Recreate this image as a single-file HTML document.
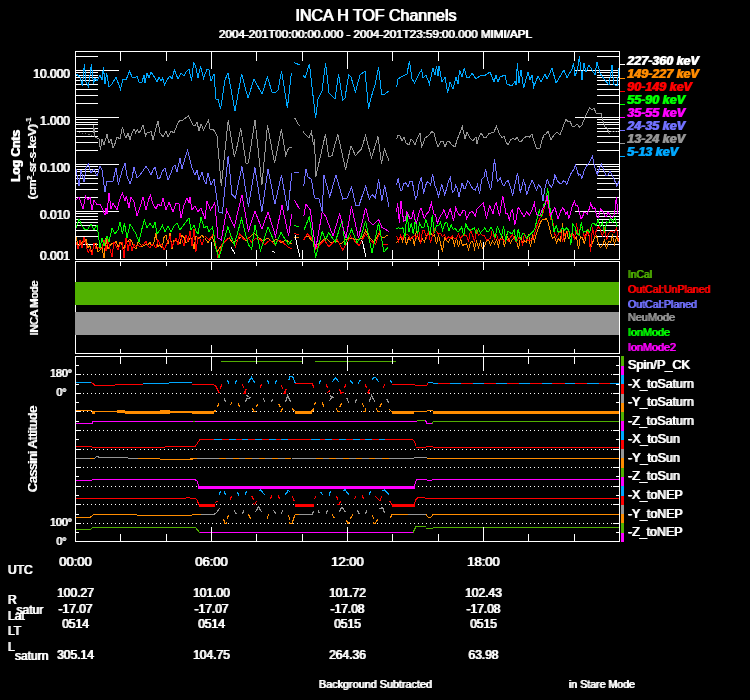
<!DOCTYPE html>
<html lang="en">
<head>
<meta charset="utf-8">
<title>INCA H TOF Channels</title>
<style>
html,body{margin:0;padding:0;background:#000;}
body{width:750px;height:700px;overflow:hidden;}
svg{display:block;font-family:"Liberation Sans",sans-serif;}
svg rect{shape-rendering:crispEdges;}
svg polyline, svg line{shape-rendering:crispEdges;stroke-linejoin:miter;}
svg text{stroke-width:0.12px;}
</style>
</head>
<body>
<svg width="750" height="700" viewBox="0 0 750 700">
<defs>
<filter id="ds" x="-2" y="-2" width="760" height="710" filterUnits="userSpaceOnUse" color-interpolation-filters="sRGB"><feOffset dx="1" dy="0" result="o"/><feMerge><feMergeNode in="SourceGraphic"/><feMergeNode in="o"/></feMerge></filter>
<filter id="dv" x="-2" y="-2" width="760" height="710" filterUnits="userSpaceOnUse" color-interpolation-filters="sRGB"><feOffset dx="0" dy="-1" result="o"/><feMerge><feMergeNode in="SourceGraphic"/><feMergeNode in="o"/></feMerge></filter>
</defs>
<rect x="0" y="0" width="750" height="700" fill="#000"/>
<g id="panel1">
<rect x="75" y="244" width="23" height="1" fill="#fff"/>
<rect x="597" y="244" width="23" height="1" fill="#fff"/>
<rect x="75" y="236" width="23" height="1" fill="#fff"/>
<rect x="597" y="236" width="23" height="1" fill="#fff"/>
<rect x="75" y="230" width="23" height="1" fill="#fff"/>
<rect x="597" y="230" width="23" height="1" fill="#fff"/>
<rect x="75" y="225" width="23" height="1" fill="#fff"/>
<rect x="597" y="225" width="23" height="1" fill="#fff"/>
<rect x="75" y="222" width="23" height="1" fill="#fff"/>
<rect x="597" y="222" width="23" height="1" fill="#fff"/>
<rect x="75" y="219" width="23" height="1" fill="#fff"/>
<rect x="597" y="219" width="23" height="1" fill="#fff"/>
<rect x="75" y="216" width="23" height="1" fill="#fff"/>
<rect x="597" y="216" width="23" height="1" fill="#fff"/>
<rect x="75" y="213" width="23" height="1" fill="#fff"/>
<rect x="597" y="213" width="23" height="1" fill="#fff"/>
<rect x="75" y="211" width="44" height="1" fill="#fff"/>
<rect x="575" y="211" width="45" height="1" fill="#fff"/>
<rect x="75" y="197" width="23" height="1" fill="#fff"/>
<rect x="597" y="197" width="23" height="1" fill="#fff"/>
<rect x="75" y="189" width="23" height="1" fill="#fff"/>
<rect x="597" y="189" width="23" height="1" fill="#fff"/>
<rect x="75" y="183" width="23" height="1" fill="#fff"/>
<rect x="597" y="183" width="23" height="1" fill="#fff"/>
<rect x="75" y="178" width="23" height="1" fill="#fff"/>
<rect x="597" y="178" width="23" height="1" fill="#fff"/>
<rect x="75" y="175" width="23" height="1" fill="#fff"/>
<rect x="597" y="175" width="23" height="1" fill="#fff"/>
<rect x="75" y="171" width="23" height="1" fill="#fff"/>
<rect x="597" y="171" width="23" height="1" fill="#fff"/>
<rect x="75" y="169" width="23" height="1" fill="#fff"/>
<rect x="597" y="169" width="23" height="1" fill="#fff"/>
<rect x="75" y="166" width="23" height="1" fill="#fff"/>
<rect x="597" y="166" width="23" height="1" fill="#fff"/>
<rect x="75" y="164" width="44" height="1" fill="#fff"/>
<rect x="575" y="164" width="45" height="1" fill="#fff"/>
<rect x="75" y="150" width="23" height="1" fill="#fff"/>
<rect x="597" y="150" width="23" height="1" fill="#fff"/>
<rect x="75" y="142" width="23" height="1" fill="#fff"/>
<rect x="597" y="142" width="23" height="1" fill="#fff"/>
<rect x="75" y="136" width="23" height="1" fill="#fff"/>
<rect x="597" y="136" width="23" height="1" fill="#fff"/>
<rect x="75" y="131" width="23" height="1" fill="#fff"/>
<rect x="597" y="131" width="23" height="1" fill="#fff"/>
<rect x="75" y="128" width="23" height="1" fill="#fff"/>
<rect x="597" y="128" width="23" height="1" fill="#fff"/>
<rect x="75" y="124" width="23" height="1" fill="#fff"/>
<rect x="597" y="124" width="23" height="1" fill="#fff"/>
<rect x="75" y="122" width="23" height="1" fill="#fff"/>
<rect x="597" y="122" width="23" height="1" fill="#fff"/>
<rect x="75" y="119" width="23" height="1" fill="#fff"/>
<rect x="597" y="119" width="23" height="1" fill="#fff"/>
<rect x="75" y="117" width="44" height="1" fill="#fff"/>
<rect x="575" y="117" width="45" height="1" fill="#fff"/>
<rect x="75" y="103" width="23" height="1" fill="#fff"/>
<rect x="597" y="103" width="23" height="1" fill="#fff"/>
<rect x="75" y="95" width="23" height="1" fill="#fff"/>
<rect x="597" y="95" width="23" height="1" fill="#fff"/>
<rect x="75" y="89" width="23" height="1" fill="#fff"/>
<rect x="597" y="89" width="23" height="1" fill="#fff"/>
<rect x="75" y="84" width="23" height="1" fill="#fff"/>
<rect x="597" y="84" width="23" height="1" fill="#fff"/>
<rect x="75" y="80" width="23" height="1" fill="#fff"/>
<rect x="597" y="80" width="23" height="1" fill="#fff"/>
<rect x="75" y="77" width="23" height="1" fill="#fff"/>
<rect x="597" y="77" width="23" height="1" fill="#fff"/>
<rect x="75" y="75" width="23" height="1" fill="#fff"/>
<rect x="597" y="75" width="23" height="1" fill="#fff"/>
<rect x="75" y="72" width="23" height="1" fill="#fff"/>
<rect x="597" y="72" width="23" height="1" fill="#fff"/>
<rect x="75" y="70" width="44" height="1" fill="#fff"/>
<rect x="575" y="70" width="45" height="1" fill="#fff"/>
<rect x="75" y="56" width="23" height="1" fill="#fff"/>
<rect x="597" y="56" width="23" height="1" fill="#fff"/>
<polyline points="205.0,238.0 208.0,243.0 212.0,236.0 217.0,252.0 221.0,246.0 225.0,241.0 229.0,238.0 233.0,243.0 237.0,240.0 242.0,236.0 246.0,241.0 250.0,237.0 254.0,233.0 259.0,238.0 263.0,241.0 268.0,238.0 272.0,242.0 277.0,239.0 281.0,243.0 286.0,240.0 291.8,244.0" fill="none" stroke="#ff8c00" stroke-width="1" />
<polyline points="294.4,237.0 299.4,238.0" fill="none" stroke="#ff8c00" stroke-width="1" />
<polyline points="303.8,238.0 308.0,236.0 312.0,241.0 316.0,246.0 321.0,242.0 326.0,238.0 331.0,243.0 336.0,241.0 341.0,244.0 345.0,240.0 351.5,238.0 357.0,240.0 362.4,238.0 365.6,230.5 370.0,238.0 374.3,242.4 378.6,233.7 383.0,238.0 388.4,234.8" fill="none" stroke="#ff8c00" stroke-width="1" />
<polyline points="76.0,236.7 78.0,245.0 80.0,245.2 82.0,242.1 84.0,241.5 86.0,239.3 88.0,247.5 90.0,245.7 92.0,255.0 94.0,243.1 96.0,243.2 98.0,252.1 100.0,250.0 102.0,247.2 104.0,258.0 106.0,238.5 108.0,248.8 110.0,245.3 112.0,243.6 114.0,243.4 116.0,241.3 118.0,247.3 120.0,242.1 122.0,245.1 124.0,248.7 126.0,241.1 128.0,241.4 130.0,239.1 132.0,242.0 134.0,247.1 136.0,248.6 138.0,242.4 140.0,243.9 142.0,246.4 144.0,245.3 146.0,244.6 148.0,244.8 150.0,242.4 152.0,246.3 154.0,242.2 156.0,233.0 158.0,246.7 160.0,244.5 162.0,248.3 164.0,237.4 166.0,235.1 168.0,244.3 170.0,233.3 172.0,249.2 174.0,239.8 176.0,240.9 178.0,241.2 180.0,243.6 182.0,235.4 184.0,237.5 186.0,242.4 188.0,241.4 190.0,238.5 192.0,239.1 194.0,248.9 196.0,235.8 198.0,238.5 200.0,237.5 202.0,234.7 204.0,238.3" fill="none" stroke="#ff8c00" stroke-width="1" />
<polyline points="396.5,242.9 398.5,240.2 400.5,236.8 402.5,241.5 404.5,234.8 406.5,244.9 408.5,237.7 410.5,240.0 412.5,236.8 414.5,245.6 416.5,229.7 418.5,239.0 420.5,242.3 422.5,239.0 424.5,241.7 426.5,236.2 428.5,232.3 430.5,232.2 432.5,235.7 434.5,235.0 436.5,244.1 438.5,234.6 440.5,243.3 442.5,251.7 444.5,237.7 446.5,240.4 448.5,241.9 450.5,238.2 452.5,237.8 454.5,245.3 456.5,238.0 458.5,247.3 460.5,238.9 462.5,245.3 464.5,244.7 466.5,243.9 468.5,249.6 470.5,242.3 472.5,241.2 474.5,248.9 476.5,241.2 478.5,247.3 480.5,241.4 482.5,248.3 484.5,246.7 486.5,240.9 488.5,239.9 490.5,245.1 492.5,241.3 494.5,243.9 496.5,239.8 498.5,246.1 500.5,238.3 502.5,236.8 504.5,247.4 506.5,235.0 508.5,239.1 510.5,243.2 512.5,239.4 514.5,236.8 516.5,241.3 518.5,248.9 520.5,236.7 522.5,243.0 524.5,240.9 526.5,242.1 528.5,234.1 530.5,246.8 532.5,235.7 534.5,241.3 536.5,233.1 538.5,227.9 540.5,222.2 542.5,219.7 544.5,219.6 546.5,218.4 548.5,223.2 550.5,232.7 552.5,238.6 554.5,236.9 556.5,242.5 558.5,238.7 560.5,240.9 562.5,223.4 564.5,242.1 566.5,231.5 568.5,238.3 570.5,236.2 572.5,232.4 574.5,238.9 576.5,236.7 578.5,249.2 580.5,236.3 582.5,238.0 584.5,244.0 586.5,231.0 588.5,232.3 590.5,248.0 592.5,243.0 594.5,237.4 596.5,235.3 598.5,244.0 600.5,247.5 602.5,245.7 604.5,240.1 606.5,248.9 608.5,241.3 610.5,242.5 612.5,235.7 614.5,243.9 616.5,237.4 618.5,241.7" fill="none" stroke="#ff8c00" stroke-width="1" />
<polyline points="205.0,236.0 209.0,240.0 213.7,233.7 218.0,257.6 222.0,244.6 226.7,240.0 231.0,236.0 235.4,246.7 239.7,233.7 244.0,240.0 248.4,238.0 251.7,242.4 256.0,238.0 260.4,240.0 264.7,244.6 270.0,240.0 274.5,244.6 278.8,240.0 283.0,242.4 287.5,246.7 291.8,249.0" fill="none" stroke="#ff0000" stroke-width="1" />
<polyline points="294.4,233.7 299.4,234.8" fill="none" stroke="#ff0000" stroke-width="1" />
<polyline points="303.8,240.0 307.0,233.7 311.4,238.0 315.7,249.0 320.0,244.6 324.4,240.0 328.7,246.7 333.0,242.4 337.4,240.0 342.8,250.0 347.2,242.4 350.4,236.0 355.9,242.4 359.0,245.7 365.6,233.7 370.0,240.0 375.4,244.6 379.7,231.5 383.0,244.6 388.4,244.6" fill="none" stroke="#ff0000" stroke-width="1" />
<polyline points="76.0,241.7 78.0,248.9 80.0,240.5 82.0,248.0 84.0,237.1 86.0,245.2 88.0,252.4 90.0,249.3 92.0,254.8 94.0,243.0 96.0,248.6 98.0,246.9 100.0,248.8 102.0,248.5 104.0,239.7 106.0,251.3 108.0,239.4 110.0,248.6 112.0,256.8 114.0,241.9 116.0,246.1 118.0,249.8 120.0,244.3 122.0,242.1 124.0,258.0 126.0,238.1 128.0,250.6 130.0,240.6 132.0,250.5 134.0,244.6 136.0,246.9 138.0,244.9 140.0,247.2 142.0,245.1 144.0,243.9 146.0,241.4 148.0,246.2 150.0,247.6 152.0,244.3 154.0,245.0 156.0,248.3 158.0,239.6 160.0,244.4 162.0,245.1 164.0,249.8 166.0,245.6 168.0,241.1 170.0,236.4 172.0,247.4 174.0,241.9 176.0,238.5 178.0,244.9 180.0,233.4 182.0,240.2 184.0,246.2 186.0,234.8 188.0,241.4 190.0,231.0 192.0,246.2 194.0,228.8 196.0,251.5 198.0,236.7 200.0,239.1 202.0,244.7 204.0,238.7" fill="none" stroke="#ff0000" stroke-width="1" />
<polyline points="396.5,235.7 398.5,241.7 400.5,235.0 402.5,238.6 404.5,234.6 406.5,234.2 408.5,235.2 410.5,239.6 412.5,237.2 414.5,235.3 416.5,238.1 418.5,228.4 420.5,244.1 422.5,230.3 424.5,231.0 426.5,237.4 428.5,232.0 430.5,243.0 432.5,235.2 434.5,229.1 436.5,231.4 438.5,234.3 440.5,233.1 442.5,236.6 444.5,234.6 446.5,239.6 448.5,236.8 450.5,238.2 452.5,236.2 454.5,238.8 456.5,238.2 458.5,234.0 460.5,238.6 462.5,235.8 464.5,235.0 466.5,235.1 468.5,241.9 470.5,230.3 472.5,234.7 474.5,241.5 476.5,230.4 478.5,235.6 480.5,233.2 482.5,236.0 484.5,235.9 486.5,240.3 488.5,239.1 490.5,238.5 492.5,228.6 494.5,239.1 496.5,234.9 498.5,240.0 500.5,239.3 502.5,239.5 504.5,241.1 506.5,238.9 508.5,241.2 510.5,237.3 512.5,234.5 514.5,239.3 516.5,242.4 518.5,238.0 520.5,238.5 522.5,244.3 524.5,233.9 526.5,238.8 528.5,240.9 530.5,240.7 532.5,239.0 534.5,234.3 536.5,226.9 538.5,221.5 540.5,217.3 542.5,215.4 544.5,207.1 546.5,200.0 548.5,205.3 550.5,219.3 552.5,219.6 554.5,233.9 556.5,236.8 558.5,234.2 560.5,230.4 562.5,242.0 564.5,233.7 566.5,233.8 568.5,230.1 570.5,235.3 572.5,234.2 574.5,238.9 576.5,223.3 578.5,235.8 580.5,227.3 582.5,228.0 584.5,237.9 586.5,234.9 588.5,229.5 590.5,252.3 592.5,227.0 594.5,237.3 596.5,229.6 598.5,226.6 600.5,230.2 602.5,235.8 604.5,227.4 606.5,240.3 608.5,233.8 610.5,231.7 612.5,232.0 614.5,232.3 616.5,227.8 618.5,241.1" fill="none" stroke="#ff0000" stroke-width="1" />
<polyline points="76.0,228.0 79.0,219.0 82.0,226.0 85.0,230.0 88.0,229.0 91.0,224.0 94.0,230.0 97.0,225.0 98.0,232.0 100.0,248.0 102.0,238.0 104.0,246.0 107.0,236.0 109.0,242.0 112.0,228.0 115.0,234.0 118.0,230.0 120.0,222.0 122.4,234.0 124.4,223.0 127.0,238.0 130.0,224.0 133.0,229.0 136.0,234.0 139.0,242.0 141.6,230.0 144.4,220.0 147.0,228.0 150.0,223.0 153.0,228.0 155.0,222.0 157.0,234.0 160.0,230.0 162.4,225.0 165.0,232.0 168.0,226.0 171.0,232.0 174.0,226.0 177.0,223.0 180.0,230.0 183.0,226.0 186.0,222.0 189.0,218.0 191.0,230.0 194.0,225.0 196.0,231.0 198.0,234.0 201.0,217.0 204.0,228.0 207.0,226.0 209.0,231.5 212.6,227.0 215.9,249.0 219.0,257.6 227.8,227.0 234.3,244.6 241.5,218.5 248.4,244.6 251.7,249.0 254.9,225.0 260.4,251.0 268.0,227.0 275.5,244.6 281.0,232.6 288.6,244.6 291.8,240.0" fill="none" stroke="#00ff00" stroke-width="1" />
<polyline points="294.4,225.7 299.4,226.8" fill="none" stroke="#00ff00" stroke-width="1" />
<polyline points="303.8,230.5 309.2,217.0 315.7,257.6 322.2,231.5 325.5,240.0 328.7,232.6 335.2,242.0 342.2,220.7 345.0,244.6 351.5,229.4 357.0,242.4 361.3,236.0 365.6,220.7 372.0,253.0 378.6,222.9 384.0,252.0 388.4,246.7" fill="none" stroke="#00ff00" stroke-width="1" />
<polyline points="396.5,228.6 398.6,227.6 400.7,228.7 402.8,227.5 404.9,237.5 407.0,212.5 409.1,232.3 411.2,223.2 413.3,233.9 415.4,219.5 417.5,234.3 419.6,223.1 421.7,227.6 423.8,228.0 425.9,219.4 428.0,226.4 430.1,235.4 432.2,215.2 434.3,233.3 436.4,225.2 438.5,225.6 440.6,222.1 442.7,230.3 444.8,223.4 446.9,222.2 449.0,231.2 451.1,224.6 453.2,229.5 455.3,228.4 457.4,231.9 459.5,230.6 461.6,226.7 463.7,235.7 465.8,223.8 467.9,228.3 470.0,230.7 472.1,229.4 474.2,227.7 476.3,233.6 478.4,229.1 480.5,232.8 482.6,230.5 484.7,228.0 486.8,231.2 488.9,231.1 491.0,227.6 493.1,231.2 495.2,237.5 497.3,226.8 499.4,231.1 501.5,236.7 503.6,226.2 505.7,241.5 507.8,231.5 509.9,232.7 512.0,234.1 514.1,229.8 516.2,242.2 518.3,228.6 520.4,239.9 522.5,233.3 524.6,234.2 526.7,238.4 528.8,235.8 530.9,233.7 533.0,231.6 535.1,227.9 537.2,217.8 539.3,210.5 541.4,217.1 543.5,205.3 545.6,202.8 547.7,188.4 549.8,207.1 551.9,219.2 554.0,231.5 556.1,225.4 558.2,232.2 560.3,231.2 562.4,227.6 564.5,230.2 566.6,228.1 568.7,230.1 570.8,244.7 572.9,224.1 575.0,227.3 577.1,233.8 579.2,235.3 581.3,222.0 583.4,232.5 585.5,231.3 587.6,230.0 589.7,232.4 591.8,224.2 593.9,222.9 596.0,225.6 598.1,219.8 600.2,226.8 602.3,222.0 604.4,233.2 606.5,222.0 608.6,222.7 610.7,218.0 612.8,222.5 614.9,217.1 617.0,226.7" fill="none" stroke="#00ff00" stroke-width="1" />
<polyline points="76.0,200.0 79.0,197.0 83.0,209.0 85.6,196.0 88.0,200.0 90.0,197.0 92.0,210.0 94.0,200.0 97.0,205.0 100.0,204.0 102.0,208.0 105.0,215.0 106.0,208.0 107.0,214.0 109.0,193.0 111.0,209.0 113.0,203.0 117.0,210.0 119.5,200.0 122.4,193.0 125.0,201.0 126.4,196.0 129.0,208.0 131.0,197.0 134.0,202.0 137.0,216.0 140.0,207.0 143.0,197.0 146.0,210.0 148.4,200.0 150.4,195.0 153.0,204.0 156.0,209.0 158.0,204.0 161.0,206.0 163.0,198.0 166.0,210.0 169.0,202.0 173.0,212.0 176.0,203.0 179.0,204.0 181.0,218.0 184.0,205.0 187.0,198.0 189.0,203.0 190.0,197.0 192.0,210.0 195.0,206.0 198.0,212.0 201.0,208.0 205.0,219.0 207.0,201.0 210.4,210.0 214.8,203.0 218.0,238.0 221.3,240.0 226.7,210.0 234.3,227.0 241.9,194.7 248.4,231.5 254.9,211.0 261.9,229.0 268.0,212.0 275.5,236.0 282.0,205.5 288.6,236.0 291.8,214.0" fill="none" stroke="#ff00ff" stroke-width="1" />
<polyline points="294.4,200.0 299.4,208.8" fill="none" stroke="#ff00ff" stroke-width="1" />
<polyline points="303.8,216.0 306.0,204.0 310.3,210.0 315.7,249.0 322.2,212.0 325.5,216.0 333.0,236.0 339.6,214.0 346.0,238.0 351.5,206.6 358.5,238.0 365.6,207.7 368.9,220.7 373.2,225.0 378.6,219.6 381.9,227.2 389.0,231.5" fill="none" stroke="#ff00ff" stroke-width="1" />
<polyline points="396.4,212.0 397.7,203.0 399.3,223.0 401.0,201.0 403.6,221.0 405.2,220.3 406.9,212.0 410.0,218.5 411.7,218.3 413.4,210.0 415.0,220.0 416.6,223.0 419.0,213.0 421.0,207.7 424.2,218.5 426.5,214.0 428.6,212.0 431.4,203.0 434.0,214.0 435.6,214.8 437.3,223.0 440.5,216.0 442.1,213.8 443.8,210.0 447.0,218.5 448.6,213.0 450.3,208.8 453.5,220.7 455.7,207.7 458.0,213.0 460.0,216.0 461.6,213.3 463.3,210.0 465.0,210.9 466.6,218.5 469.5,213.0 472.0,211.0 475.2,216.0 476.9,209.1 478.5,207.7 480.5,205.5 483.3,203.0 486.5,218.5 488.1,211.5 489.8,205.5 493.0,214.0 494.6,206.0 496.3,203.0 499.5,216.0 501.1,205.4 502.8,195.7 506.0,214.0 507.6,213.1 509.3,220.7 511.0,211.6 512.6,210.0 514.7,225.0 516.4,218.2 518.0,207.7 519.6,209.1 521.2,212.0 524.0,217.0 526.7,212.0 529.5,215.0 532.0,210.0 534.3,203.0 536.4,214.0 538.0,215.1 539.7,216.0 542.5,209.0 545.0,205.5 547.3,194.7 548.9,207.5 550.5,216.0 552.7,211.0 554.9,207.7 558.0,218.5 560.3,212.0 562.5,207.7 564.1,209.6 565.7,214.0 567.4,212.3 569.0,218.5 571.7,208.0 574.4,201.0 576.0,205.8 577.7,205.5 579.4,212.8 581.0,218.5 582.6,216.7 584.2,212.0 587.4,214.0 589.0,209.6 590.7,203.0 593.0,209.0 595.0,207.7 596.6,216.8 598.3,217.4 600.5,208.8 602.6,211.2 604.8,216.0 606.4,216.3 608.0,212.0 609.6,214.1 611.3,218.5 613.0,216.9 614.6,214.0 616.3,196.8 618.0,214.0" fill="none" stroke="#ff00ff" stroke-width="1" />
<polyline points="76.0,169.0 79.0,186.0 81.0,170.0 84.0,182.0 86.0,168.0 88.4,164.0 91.0,173.0 94.0,169.0 97.0,176.0 100.0,166.0 102.0,170.0 105.0,192.0 107.0,181.0 110.0,182.0 113.0,181.0 116.0,168.0 118.4,185.0 120.4,176.8 122.4,170.0 125.0,163.0 127.0,176.0 130.0,184.0 132.0,178.1 134.0,167.0 137.0,178.0 140.0,175.0 143.0,171.0 146.0,166.0 148.4,170.0 151.0,175.0 153.0,170.0 155.0,167.0 158.0,179.0 160.0,177.6 162.0,172.0 165.0,168.0 168.0,180.0 171.0,173.0 173.0,167.3 175.0,165.0 177.0,172.0 180.0,158.0 182.0,169.0 185.0,158.0 187.6,150.0 190.0,160.0 192.0,168.0 195.0,175.0 197.0,170.0 199.0,180.0 202.0,172.0 204.0,180.2 206.0,184.0 208.0,173.0 211.0,185.0 214.0,179.0 217.0,200.0 219.0,212.0 222.4,213.0 228.2,155.6 232.0,194.7 235.4,198.0 241.9,166.4 248.4,206.6 254.9,167.5 261.9,212.0 268.0,168.6 274.9,204.4 281.4,175.0 287.9,211.0 291.8,173.0" fill="none" stroke="#7272ff" stroke-width="1" />
<polyline points="294.0,172.0 299.4,173.0" fill="none" stroke="#7272ff" stroke-width="1" />
<polyline points="303.8,186.0 306.0,168.6 308.0,177.0 311.4,179.5 314.6,198.0 319.0,199.0 322.2,212.0 324.0,175.0 329.8,196.8 335.9,175.0 342.8,199.0 347.2,198.0 351.5,187.0 355.9,205.5 359.0,205.5 365.6,186.0 369.3,199.0 372.0,194.7 375.4,198.0 378.6,179.5 381.9,201.0 384.7,185.0 389.0,206.6" fill="none" stroke="#7272ff" stroke-width="1" />
<polyline points="396.4,185.0 398.2,178.4 400.4,190.3 402.0,190.3 403.6,183.8 405.8,182.9 408.0,187.0 410.1,181.0 412.3,181.6 415.5,199.0 417.1,195.5 418.8,185.0 421.4,177.3 423.6,193.6 425.6,185.4 427.5,181.6 430.7,185.0 432.5,174.0 435.0,186.0 436.6,188.7 438.3,196.8 440.0,191.4 441.6,183.8 444.8,194.7 447.0,187.0 448.6,181.1 450.3,177.3 452.4,192.5 454.0,191.5 455.7,185.0 457.4,189.0 459.0,196.8 462.2,182.7 463.9,188.6 465.5,188.0 467.6,180.5 469.2,182.0 470.9,186.0 473.0,188.9 475.2,190.3 477.4,185.0 479.6,193.6 481.7,179.5 484.0,177.3 485.6,168.6 487.3,178.8 489.0,184.2 490.7,190.0 492.5,177.4 494.4,158.8 497.4,181.6 500.5,178.0 502.2,183.5 503.9,186.0 506.0,182.0 508.2,180.5 510.5,187.0 512.6,195.7 515.0,184.0 517.6,173.0 520.2,192.5 523.4,180.5 525.0,184.4 526.7,194.7 529.5,186.0 532.0,180.5 534.0,184.0 536.4,190.3 538.6,185.0 540.8,187.0 543.0,201.0 545.0,188.0 547.3,179.5 549.5,185.0 551.6,187.0 553.2,183.7 554.9,175.0 557.5,181.0 560.3,183.8 561.9,183.0 563.5,181.0 565.1,181.6 566.8,184.9 569.0,178.0 571.2,173.0 573.4,170.0 575.5,165.4 578.5,175.0 580.2,174.5 582.0,178.4 584.0,171.0 586.4,166.4 589.5,162.0 592.4,156.7 595.0,168.0 597.2,175.0 599.5,168.0 601.5,164.3 604.5,172.0 606.2,175.9 608.0,175.0 610.0,171.0 612.4,176.2 614.5,180.0 616.7,186.0 619.0,181.6" fill="none" stroke="#7272ff" stroke-width="1" />
<polyline points="93.0,133.0 93.6,125.0 95.0,137.0 97.0,138.0 99.0,139.0 100.4,150.0 102.0,139.0 104.0,145.0 107.0,134.0 109.0,143.0 111.0,139.0 113.0,148.0 115.0,143.6 117.0,137.0 120.0,139.0 122.4,127.0 124.2,134.2 126.0,138.0 128.0,133.0 130.0,140.0 132.0,132.9 134.0,129.0 135.7,132.8 137.3,130.1 139.0,133.0 141.0,129.9 143.0,125.0 145.6,136.0 147.3,132.5 149.0,133.0 151.0,131.0 153.0,140.0 156.0,128.0 158.0,121.0 160.0,133.0 163.0,137.0 166.0,131.0 168.0,137.0 171.0,131.0 174.0,133.0 177.0,125.0 180.0,120.0 183.0,120.0 185.6,118.0 188.4,116.0 191.0,121.0 193.0,124.8 195.0,126.0 197.0,122.0 199.0,131.0 201.0,124.0 203.6,130.0 206.0,125.0 208.6,120.0 210.0,129.0 213.0,129.0 215.6,133.0 217.0,136.0 221.3,186.0 228.2,120.0 234.3,156.7 236.5,149.0 240.8,128.5 246.2,164.0 248.4,163.0 255.0,120.0 261.9,185.0 267.5,125.0 274.5,163.0 281.4,129.5 285.7,155.6 288.6,148.0 291.8,147.0" fill="none" stroke="#969696" stroke-width="1" />
<polyline points="294.4,117.6 299.4,126.0" fill="none" stroke="#969696" stroke-width="1" />
<polyline points="303.0,131.7 309.0,138.0 311.4,131.7 313.5,144.7 314.6,139.0 315.7,177.0 325.5,134.0 328.7,156.7 332.0,155.6 337.8,134.0 345.6,169.7 351.0,145.8 355.4,155.6 361.3,149.0 365.6,135.6 371.5,157.8 378.0,136.5 381.5,164.0 384.5,149.0 389.0,161.0" fill="none" stroke="#969696" stroke-width="1" />
<polyline points="396.6,139.0 398.0,135.0 400.0,136.0 402.0,141.0 404.0,137.0 406.0,143.0 409.0,145.0 411.0,139.0 413.0,141.0 415.0,145.0 417.5,138.0 420.0,133.0 421.6,147.0 423.3,143.6 425.0,138.0 428.0,136.0 429.8,134.5 431.6,131.4 434.0,133.0 436.0,141.0 438.0,147.0 440.5,142.0 443.0,141.0 445.0,147.0 447.0,142.0 449.0,141.0 452.0,145.0 455.0,147.0 457.0,140.0 459.0,135.0 460.7,130.7 462.4,126.6 465.0,139.0 467.0,132.0 470.0,138.0 473.0,141.0 476.0,137.0 477.0,144.0 479.0,136.8 481.0,133.0 483.5,137.0 486.0,138.0 488.5,134.0 491.0,133.0 494.0,132.0 496.4,126.0 499.0,133.0 502.0,138.0 504.0,136.0 506.0,142.0 508.0,145.0 510.5,140.0 513.0,138.0 515.0,140.0 517.0,137.0 519.0,141.0 521.0,142.0 524.0,138.0 527.0,136.0 529.5,137.0 532.0,134.0 534.5,143.0 537.0,149.0 540.0,148.0 542.0,140.0 544.0,135.0 546.0,134.0 548.0,131.0 551.0,140.0 554.0,135.0 557.0,132.0 560.0,135.0 563.0,127.0 566.0,119.0 568.0,122.0 570.0,121.0 572.0,125.8 574.0,127.0 577.0,124.0 579.5,127.0 582.0,125.0 585.0,117.0 588.0,111.0 589.6,108.0 592.0,110.0 594.0,108.0 596.0,112.8 598.0,114.0 601.0,113.0 603.0,121.0 605.0,127.0 607.0,128.0 609.0,133.0" fill="none" stroke="#969696" stroke-width="1" />
<polyline points="76.0,74.0 80.0,77.0 82.4,86.0 84.4,64.0 86.0,82.0 88.4,87.0 90.0,75.0 91.4,64.0 93.6,84.0 95.0,78.0 97.0,81.0 100.0,75.0 102.0,80.0 103.4,67.0 105.0,84.0 106.6,73.0 109.0,87.0 112.0,84.0 116.0,77.0 120.4,89.0 123.0,79.0 126.0,80.0 129.6,71.0 132.0,77.0 135.0,78.0 137.0,76.0 139.0,82.0 142.0,82.0 144.0,75.0 145.0,83.0 147.0,73.0 149.0,78.0 151.0,72.0 153.0,75.0 155.0,78.0 157.0,82.0 159.0,77.0 161.0,81.0 162.6,78.0 164.6,85.0 167.0,80.0 170.0,76.0 172.0,79.0 174.4,70.0 178.0,79.0 181.0,73.0 184.0,76.0 186.0,72.0 189.0,69.0 191.6,81.0 193.6,63.0 195.6,66.0 198.0,78.0 200.6,66.0 203.6,78.0 207.0,69.0 209.0,70.0 211.0,81.0 214.0,74.0 216.0,99.0 218.0,99.0 220.6,109.0 225.0,80.0 228.0,73.0 235.0,111.0 241.6,74.0 248.0,98.0 254.0,79.0 262.0,94.0 267.4,77.0 272.0,92.0 275.0,93.0 278.0,90.0 281.6,71.0 287.4,108.0 291.4,73.0" fill="none" stroke="#00a8ff" stroke-width="1" />
<polyline points="294.0,62.6 300.0,65.0" fill="none" stroke="#00a8ff" stroke-width="1" />
<polyline points="303.0,75.0 305.0,78.0 309.4,64.0 315.6,118.0 318.0,99.0 322.0,91.0 325.6,63.0 329.0,93.0 335.0,99.0 338.6,74.0 342.6,100.0 345.0,98.0 348.6,75.0 351.0,77.0 355.4,92.0 360.0,75.0 365.0,71.0 368.6,109.0 370.6,99.0 375.0,85.0 378.6,67.0 381.6,94.0 385.0,94.0 389.0,91.0" fill="none" stroke="#00a8ff" stroke-width="1" />
<polyline points="396.6,87.0 398.0,79.0 403.0,76.0 407.0,74.0 409.4,61.0 412.0,79.0 414.6,83.0 418.0,76.0 420.0,72.0 421.6,70.0 423.0,78.0 426.0,75.0 429.4,84.0 433.0,68.0 435.0,75.0 436.6,66.0 438.0,76.0 439.0,66.0 442.0,82.0 445.0,77.0 447.6,93.0 450.0,82.0 453.0,89.0 456.0,77.0 458.0,84.0 459.6,70.0 462.0,77.0 464.4,68.0 466.4,77.0 469.0,78.0 472.0,73.0 476.0,79.0 481.0,75.0 484.0,76.0 490.0,72.0 494.0,82.0 496.0,75.0 498.0,82.0 500.0,77.0 505.0,75.0 507.0,84.0 512.0,86.0 515.0,81.0 516.0,85.0 517.4,63.0 519.0,83.0 521.0,70.0 523.6,88.0 528.0,72.0 530.0,80.0 532.0,75.0 533.6,87.0 538.0,76.0 541.0,82.0 545.0,74.0 547.0,79.0 549.0,75.0 552.0,68.0 556.0,83.0 564.0,70.0 567.0,78.0 572.0,69.0 573.6,63.0 575.0,76.0 577.4,70.0 579.4,56.0 582.0,80.0 584.0,63.0 586.0,72.0 589.0,65.0 592.0,70.0 595.0,75.0 597.0,62.0 600.0,73.0 604.0,79.0 609.0,85.0 612.0,65.0 613.6,84.0 617.0,86.0 619.0,68.0" fill="none" stroke="#00a8ff" stroke-width="1" />
<polyline points="230.7,246.7 234.7,253.5" fill="none" stroke="#ffffff" stroke-width="1" />
<polyline points="272.0,251.0 274.7,252.5" fill="none" stroke="#ffffff" stroke-width="1" />
<polyline points="295.0,235.0 296.5,242.7 300.0,256.5" fill="none" stroke="#ffffff" stroke-width="1" />
<polyline points="361.3,240.0 362.7,242.7 365.8,256.5" fill="none" stroke="#ffffff" stroke-width="1" />
<polyline points="76,131.5 92,135.5" fill="none" stroke="#6e6e6e" stroke-width="1" stroke-dasharray="1.2,2"/>
<polyline points="609,133.5 612,131.5 618,131.5" fill="none" stroke="#7a7a7a" stroke-width="1" stroke-dasharray="1.5,1.5"/>
<rect x="75" y="51" width="545" height="1" fill="#fff"/>
<rect x="75" y="259" width="545" height="1" fill="#fff"/>
<rect x="75" y="51" width="1" height="209" fill="#fff"/>
<rect x="619" y="51" width="1" height="209" fill="#fff"/>
<rect x="120" y="51" width="1" height="10" fill="#fff"/>
<rect x="120" y="250" width="1" height="10" fill="#fff"/>
<rect x="166" y="51" width="1" height="10" fill="#fff"/>
<rect x="166" y="250" width="1" height="10" fill="#fff"/>
<rect x="211" y="51" width="1" height="18" fill="#fff"/>
<rect x="211" y="242" width="1" height="18" fill="#fff"/>
<rect x="256" y="51" width="1" height="10" fill="#fff"/>
<rect x="256" y="250" width="1" height="10" fill="#fff"/>
<rect x="302" y="51" width="1" height="10" fill="#fff"/>
<rect x="302" y="250" width="1" height="10" fill="#fff"/>
<rect x="347" y="51" width="1" height="18" fill="#fff"/>
<rect x="347" y="242" width="1" height="18" fill="#fff"/>
<rect x="392" y="51" width="1" height="10" fill="#fff"/>
<rect x="392" y="250" width="1" height="10" fill="#fff"/>
<rect x="438" y="51" width="1" height="10" fill="#fff"/>
<rect x="438" y="250" width="1" height="10" fill="#fff"/>
<rect x="483" y="51" width="1" height="18" fill="#fff"/>
<rect x="483" y="242" width="1" height="18" fill="#fff"/>
<rect x="528" y="51" width="1" height="10" fill="#fff"/>
<rect x="528" y="250" width="1" height="10" fill="#fff"/>
<rect x="574" y="51" width="1" height="10" fill="#fff"/>
<rect x="574" y="250" width="1" height="10" fill="#fff"/>
<g filter="url(#ds)" transform="translate(-0.5,0)">
<text x="70" y="78" font-size="12" text-anchor="end" fill="#fff" stroke="#fff" font-weight="normal" font-style="normal" >10.000</text>
<text x="70" y="125" font-size="12" text-anchor="end" fill="#fff" stroke="#fff" font-weight="normal" font-style="normal" >1.000</text>
<text x="70" y="172" font-size="12" text-anchor="end" fill="#fff" stroke="#fff" font-weight="normal" font-style="normal" >0.100</text>
<text x="70" y="219" font-size="12" text-anchor="end" fill="#fff" stroke="#fff" font-weight="normal" font-style="normal" >0.010</text>
<text x="70" y="259.5" font-size="12" text-anchor="end" fill="#fff" stroke="#fff" font-weight="normal" font-style="normal" >0.001</text>
</g>
</g>
<g id="panel2">
<rect x="75" y="261" width="545" height="1" fill="#fff"/>
<rect x="75" y="353" width="545" height="1" fill="#fff"/>
<rect x="75" y="261" width="1" height="93" fill="#fff"/>
<rect x="619" y="261" width="1" height="93" fill="#fff"/>
<rect x="75" y="282" width="544" height="23" fill="#50b000"/>
<rect x="75" y="312" width="544" height="23" fill="#969696"/>
<rect x="120" y="261" width="1" height="5" fill="#fff"/>
<rect x="120" y="349" width="1" height="5" fill="#fff"/>
<rect x="166" y="261" width="1" height="5" fill="#fff"/>
<rect x="166" y="349" width="1" height="5" fill="#fff"/>
<rect x="211" y="261" width="1" height="9" fill="#fff"/>
<rect x="211" y="345" width="1" height="9" fill="#fff"/>
<rect x="256" y="261" width="1" height="5" fill="#fff"/>
<rect x="256" y="349" width="1" height="5" fill="#fff"/>
<rect x="302" y="261" width="1" height="5" fill="#fff"/>
<rect x="302" y="349" width="1" height="5" fill="#fff"/>
<rect x="347" y="261" width="1" height="9" fill="#fff"/>
<rect x="347" y="345" width="1" height="9" fill="#fff"/>
<rect x="392" y="261" width="1" height="5" fill="#fff"/>
<rect x="392" y="349" width="1" height="5" fill="#fff"/>
<rect x="438" y="261" width="1" height="5" fill="#fff"/>
<rect x="438" y="349" width="1" height="5" fill="#fff"/>
<rect x="483" y="261" width="1" height="9" fill="#fff"/>
<rect x="483" y="345" width="1" height="9" fill="#fff"/>
<rect x="528" y="261" width="1" height="5" fill="#fff"/>
<rect x="528" y="349" width="1" height="5" fill="#fff"/>
<rect x="574" y="261" width="1" height="5" fill="#fff"/>
<rect x="574" y="349" width="1" height="5" fill="#fff"/>
</g>
<g id="panel3">
<path d="M83 374.5h1M87 374.5h1M91 374.5h1M95 374.5h1M99 374.5h1M103 374.5h1M107 374.5h1M111 374.5h1M115 374.5h1M119 374.5h1M123 374.5h1M127 374.5h1M131 374.5h1M135 374.5h1M140 374.5h1M144 374.5h1M148 374.5h1M152 374.5h1M156 374.5h1M160 374.5h1M164 374.5h1M168 374.5h1M172 374.5h1M176 374.5h1M180 374.5h1M184 374.5h1M188 374.5h1M192 374.5h1M196 374.5h1M200 374.5h1M204 374.5h1M208 374.5h1M212 374.5h1M216 374.5h1M220 374.5h1M224 374.5h1M228 374.5h1M232 374.5h1M236 374.5h1M240 374.5h1M244 374.5h1M248 374.5h1M252 374.5h1M256 374.5h1M260 374.5h1M264 374.5h1M268 374.5h1M273 374.5h1M277 374.5h1M281 374.5h1M285 374.5h1M289 374.5h1M293 374.5h1M297 374.5h1M301 374.5h1M305 374.5h1M309 374.5h1M313 374.5h1M317 374.5h1M321 374.5h1M325 374.5h1M329 374.5h1M333 374.5h1M337 374.5h1M341 374.5h1M345 374.5h1M349 374.5h1M353 374.5h1M357 374.5h1M361 374.5h1M365 374.5h1M369 374.5h1M373 374.5h1M377 374.5h1M381 374.5h1M385 374.5h1M389 374.5h1M393 374.5h1M397 374.5h1M401 374.5h1M405 374.5h1M410 374.5h1M414 374.5h1M418 374.5h1M422 374.5h1M426 374.5h1M430 374.5h1M434 374.5h1M438 374.5h1M442 374.5h1M446 374.5h1M450 374.5h1M454 374.5h1M458 374.5h1M462 374.5h1M466 374.5h1M470 374.5h1M474 374.5h1M478 374.5h1M482 374.5h1M486 374.5h1M490 374.5h1M494 374.5h1M498 374.5h1M502 374.5h1M506 374.5h1M510 374.5h1M514 374.5h1M518 374.5h1M522 374.5h1M526 374.5h1M530 374.5h1M534 374.5h1M538 374.5h1M543 374.5h1M547 374.5h1M551 374.5h1M555 374.5h1M559 374.5h1M563 374.5h1M567 374.5h1M571 374.5h1M575 374.5h1M579 374.5h1M583 374.5h1M587 374.5h1M591 374.5h1M595 374.5h1M599 374.5h1M603 374.5h1M607 374.5h1M611 374.5h1" stroke="#fff" stroke-width="1" fill="none" shape-rendering="crispEdges"/>
<rect x="75" y="374" width="6" height="1" fill="#fff"/>
<rect x="613" y="374" width="7" height="1" fill="#fff"/>
<path d="M83 393.5h1M87 393.5h1M91 393.5h1M95 393.5h1M99 393.5h1M103 393.5h1M107 393.5h1M111 393.5h1M115 393.5h1M119 393.5h1M123 393.5h1M127 393.5h1M131 393.5h1M135 393.5h1M140 393.5h1M144 393.5h1M148 393.5h1M152 393.5h1M156 393.5h1M160 393.5h1M164 393.5h1M168 393.5h1M172 393.5h1M176 393.5h1M180 393.5h1M184 393.5h1M188 393.5h1M192 393.5h1M196 393.5h1M200 393.5h1M204 393.5h1M208 393.5h1M212 393.5h1M216 393.5h1M220 393.5h1M224 393.5h1M228 393.5h1M232 393.5h1M236 393.5h1M240 393.5h1M244 393.5h1M248 393.5h1M252 393.5h1M256 393.5h1M260 393.5h1M264 393.5h1M268 393.5h1M273 393.5h1M277 393.5h1M281 393.5h1M285 393.5h1M289 393.5h1M293 393.5h1M297 393.5h1M301 393.5h1M305 393.5h1M309 393.5h1M313 393.5h1M317 393.5h1M321 393.5h1M325 393.5h1M329 393.5h1M333 393.5h1M337 393.5h1M341 393.5h1M345 393.5h1M349 393.5h1M353 393.5h1M357 393.5h1M361 393.5h1M365 393.5h1M369 393.5h1M373 393.5h1M377 393.5h1M381 393.5h1M385 393.5h1M389 393.5h1M393 393.5h1M397 393.5h1M401 393.5h1M405 393.5h1M410 393.5h1M414 393.5h1M418 393.5h1M422 393.5h1M426 393.5h1M430 393.5h1M434 393.5h1M438 393.5h1M442 393.5h1M446 393.5h1M450 393.5h1M454 393.5h1M458 393.5h1M462 393.5h1M466 393.5h1M470 393.5h1M474 393.5h1M478 393.5h1M482 393.5h1M486 393.5h1M490 393.5h1M494 393.5h1M498 393.5h1M502 393.5h1M506 393.5h1M510 393.5h1M514 393.5h1M518 393.5h1M522 393.5h1M526 393.5h1M530 393.5h1M534 393.5h1M538 393.5h1M543 393.5h1M547 393.5h1M551 393.5h1M555 393.5h1M559 393.5h1M563 393.5h1M567 393.5h1M571 393.5h1M575 393.5h1M579 393.5h1M583 393.5h1M587 393.5h1M591 393.5h1M595 393.5h1M599 393.5h1M603 393.5h1M607 393.5h1M611 393.5h1" stroke="#fff" stroke-width="1" fill="none" shape-rendering="crispEdges"/>
<rect x="75" y="393" width="6" height="1" fill="#fff"/>
<rect x="613" y="393" width="7" height="1" fill="#fff"/>
<path d="M83 411.5h1M87 411.5h1M91 411.5h1M95 411.5h1M99 411.5h1M103 411.5h1M107 411.5h1M111 411.5h1M115 411.5h1M119 411.5h1M123 411.5h1M127 411.5h1M131 411.5h1M135 411.5h1M140 411.5h1M144 411.5h1M148 411.5h1M152 411.5h1M156 411.5h1M160 411.5h1M164 411.5h1M168 411.5h1M172 411.5h1M176 411.5h1M180 411.5h1M184 411.5h1M188 411.5h1M192 411.5h1M196 411.5h1M200 411.5h1M204 411.5h1M208 411.5h1M212 411.5h1M216 411.5h1M220 411.5h1M224 411.5h1M228 411.5h1M232 411.5h1M236 411.5h1M240 411.5h1M244 411.5h1M248 411.5h1M252 411.5h1M256 411.5h1M260 411.5h1M264 411.5h1M268 411.5h1M273 411.5h1M277 411.5h1M281 411.5h1M285 411.5h1M289 411.5h1M293 411.5h1M297 411.5h1M301 411.5h1M305 411.5h1M309 411.5h1M313 411.5h1M317 411.5h1M321 411.5h1M325 411.5h1M329 411.5h1M333 411.5h1M337 411.5h1M341 411.5h1M345 411.5h1M349 411.5h1M353 411.5h1M357 411.5h1M361 411.5h1M365 411.5h1M369 411.5h1M373 411.5h1M377 411.5h1M381 411.5h1M385 411.5h1M389 411.5h1M393 411.5h1M397 411.5h1M401 411.5h1M405 411.5h1M410 411.5h1M414 411.5h1M418 411.5h1M422 411.5h1M426 411.5h1M430 411.5h1M434 411.5h1M438 411.5h1M442 411.5h1M446 411.5h1M450 411.5h1M454 411.5h1M458 411.5h1M462 411.5h1M466 411.5h1M470 411.5h1M474 411.5h1M478 411.5h1M482 411.5h1M486 411.5h1M490 411.5h1M494 411.5h1M498 411.5h1M502 411.5h1M506 411.5h1M510 411.5h1M514 411.5h1M518 411.5h1M522 411.5h1M526 411.5h1M530 411.5h1M534 411.5h1M538 411.5h1M543 411.5h1M547 411.5h1M551 411.5h1M555 411.5h1M559 411.5h1M563 411.5h1M567 411.5h1M571 411.5h1M575 411.5h1M579 411.5h1M583 411.5h1M587 411.5h1M591 411.5h1M595 411.5h1M599 411.5h1M603 411.5h1M607 411.5h1M611 411.5h1" stroke="#fff" stroke-width="1" fill="none" shape-rendering="crispEdges"/>
<rect x="75" y="411" width="6" height="1" fill="#fff"/>
<rect x="613" y="411" width="7" height="1" fill="#fff"/>
<path d="M83 430.5h1M87 430.5h1M91 430.5h1M95 430.5h1M99 430.5h1M103 430.5h1M107 430.5h1M111 430.5h1M115 430.5h1M119 430.5h1M123 430.5h1M127 430.5h1M131 430.5h1M135 430.5h1M140 430.5h1M144 430.5h1M148 430.5h1M152 430.5h1M156 430.5h1M160 430.5h1M164 430.5h1M168 430.5h1M172 430.5h1M176 430.5h1M180 430.5h1M184 430.5h1M188 430.5h1M192 430.5h1M196 430.5h1M200 430.5h1M204 430.5h1M208 430.5h1M212 430.5h1M216 430.5h1M220 430.5h1M224 430.5h1M228 430.5h1M232 430.5h1M236 430.5h1M240 430.5h1M244 430.5h1M248 430.5h1M252 430.5h1M256 430.5h1M260 430.5h1M264 430.5h1M268 430.5h1M273 430.5h1M277 430.5h1M281 430.5h1M285 430.5h1M289 430.5h1M293 430.5h1M297 430.5h1M301 430.5h1M305 430.5h1M309 430.5h1M313 430.5h1M317 430.5h1M321 430.5h1M325 430.5h1M329 430.5h1M333 430.5h1M337 430.5h1M341 430.5h1M345 430.5h1M349 430.5h1M353 430.5h1M357 430.5h1M361 430.5h1M365 430.5h1M369 430.5h1M373 430.5h1M377 430.5h1M381 430.5h1M385 430.5h1M389 430.5h1M393 430.5h1M397 430.5h1M401 430.5h1M405 430.5h1M410 430.5h1M414 430.5h1M418 430.5h1M422 430.5h1M426 430.5h1M430 430.5h1M434 430.5h1M438 430.5h1M442 430.5h1M446 430.5h1M450 430.5h1M454 430.5h1M458 430.5h1M462 430.5h1M466 430.5h1M470 430.5h1M474 430.5h1M478 430.5h1M482 430.5h1M486 430.5h1M490 430.5h1M494 430.5h1M498 430.5h1M502 430.5h1M506 430.5h1M510 430.5h1M514 430.5h1M518 430.5h1M522 430.5h1M526 430.5h1M530 430.5h1M534 430.5h1M538 430.5h1M543 430.5h1M547 430.5h1M551 430.5h1M555 430.5h1M559 430.5h1M563 430.5h1M567 430.5h1M571 430.5h1M575 430.5h1M579 430.5h1M583 430.5h1M587 430.5h1M591 430.5h1M595 430.5h1M599 430.5h1M603 430.5h1M607 430.5h1M611 430.5h1" stroke="#fff" stroke-width="1" fill="none" shape-rendering="crispEdges"/>
<rect x="75" y="430" width="6" height="1" fill="#fff"/>
<rect x="613" y="430" width="7" height="1" fill="#fff"/>
<path d="M83 449.5h1M87 449.5h1M91 449.5h1M95 449.5h1M99 449.5h1M103 449.5h1M107 449.5h1M111 449.5h1M115 449.5h1M119 449.5h1M123 449.5h1M127 449.5h1M131 449.5h1M135 449.5h1M140 449.5h1M144 449.5h1M148 449.5h1M152 449.5h1M156 449.5h1M160 449.5h1M164 449.5h1M168 449.5h1M172 449.5h1M176 449.5h1M180 449.5h1M184 449.5h1M188 449.5h1M192 449.5h1M196 449.5h1M200 449.5h1M204 449.5h1M208 449.5h1M212 449.5h1M216 449.5h1M220 449.5h1M224 449.5h1M228 449.5h1M232 449.5h1M236 449.5h1M240 449.5h1M244 449.5h1M248 449.5h1M252 449.5h1M256 449.5h1M260 449.5h1M264 449.5h1M268 449.5h1M273 449.5h1M277 449.5h1M281 449.5h1M285 449.5h1M289 449.5h1M293 449.5h1M297 449.5h1M301 449.5h1M305 449.5h1M309 449.5h1M313 449.5h1M317 449.5h1M321 449.5h1M325 449.5h1M329 449.5h1M333 449.5h1M337 449.5h1M341 449.5h1M345 449.5h1M349 449.5h1M353 449.5h1M357 449.5h1M361 449.5h1M365 449.5h1M369 449.5h1M373 449.5h1M377 449.5h1M381 449.5h1M385 449.5h1M389 449.5h1M393 449.5h1M397 449.5h1M401 449.5h1M405 449.5h1M410 449.5h1M414 449.5h1M418 449.5h1M422 449.5h1M426 449.5h1M430 449.5h1M434 449.5h1M438 449.5h1M442 449.5h1M446 449.5h1M450 449.5h1M454 449.5h1M458 449.5h1M462 449.5h1M466 449.5h1M470 449.5h1M474 449.5h1M478 449.5h1M482 449.5h1M486 449.5h1M490 449.5h1M494 449.5h1M498 449.5h1M502 449.5h1M506 449.5h1M510 449.5h1M514 449.5h1M518 449.5h1M522 449.5h1M526 449.5h1M530 449.5h1M534 449.5h1M538 449.5h1M543 449.5h1M547 449.5h1M551 449.5h1M555 449.5h1M559 449.5h1M563 449.5h1M567 449.5h1M571 449.5h1M575 449.5h1M579 449.5h1M583 449.5h1M587 449.5h1M591 449.5h1M595 449.5h1M599 449.5h1M603 449.5h1M607 449.5h1M611 449.5h1" stroke="#fff" stroke-width="1" fill="none" shape-rendering="crispEdges"/>
<rect x="75" y="449" width="6" height="1" fill="#fff"/>
<rect x="613" y="449" width="7" height="1" fill="#fff"/>
<path d="M83 467.5h1M87 467.5h1M91 467.5h1M95 467.5h1M99 467.5h1M103 467.5h1M107 467.5h1M111 467.5h1M115 467.5h1M119 467.5h1M123 467.5h1M127 467.5h1M131 467.5h1M135 467.5h1M140 467.5h1M144 467.5h1M148 467.5h1M152 467.5h1M156 467.5h1M160 467.5h1M164 467.5h1M168 467.5h1M172 467.5h1M176 467.5h1M180 467.5h1M184 467.5h1M188 467.5h1M192 467.5h1M196 467.5h1M200 467.5h1M204 467.5h1M208 467.5h1M212 467.5h1M216 467.5h1M220 467.5h1M224 467.5h1M228 467.5h1M232 467.5h1M236 467.5h1M240 467.5h1M244 467.5h1M248 467.5h1M252 467.5h1M256 467.5h1M260 467.5h1M264 467.5h1M268 467.5h1M273 467.5h1M277 467.5h1M281 467.5h1M285 467.5h1M289 467.5h1M293 467.5h1M297 467.5h1M301 467.5h1M305 467.5h1M309 467.5h1M313 467.5h1M317 467.5h1M321 467.5h1M325 467.5h1M329 467.5h1M333 467.5h1M337 467.5h1M341 467.5h1M345 467.5h1M349 467.5h1M353 467.5h1M357 467.5h1M361 467.5h1M365 467.5h1M369 467.5h1M373 467.5h1M377 467.5h1M381 467.5h1M385 467.5h1M389 467.5h1M393 467.5h1M397 467.5h1M401 467.5h1M405 467.5h1M410 467.5h1M414 467.5h1M418 467.5h1M422 467.5h1M426 467.5h1M430 467.5h1M434 467.5h1M438 467.5h1M442 467.5h1M446 467.5h1M450 467.5h1M454 467.5h1M458 467.5h1M462 467.5h1M466 467.5h1M470 467.5h1M474 467.5h1M478 467.5h1M482 467.5h1M486 467.5h1M490 467.5h1M494 467.5h1M498 467.5h1M502 467.5h1M506 467.5h1M510 467.5h1M514 467.5h1M518 467.5h1M522 467.5h1M526 467.5h1M530 467.5h1M534 467.5h1M538 467.5h1M543 467.5h1M547 467.5h1M551 467.5h1M555 467.5h1M559 467.5h1M563 467.5h1M567 467.5h1M571 467.5h1M575 467.5h1M579 467.5h1M583 467.5h1M587 467.5h1M591 467.5h1M595 467.5h1M599 467.5h1M603 467.5h1M607 467.5h1M611 467.5h1" stroke="#fff" stroke-width="1" fill="none" shape-rendering="crispEdges"/>
<rect x="75" y="467" width="6" height="1" fill="#fff"/>
<rect x="613" y="467" width="7" height="1" fill="#fff"/>
<path d="M83 486.5h1M87 486.5h1M91 486.5h1M95 486.5h1M99 486.5h1M103 486.5h1M107 486.5h1M111 486.5h1M115 486.5h1M119 486.5h1M123 486.5h1M127 486.5h1M131 486.5h1M135 486.5h1M140 486.5h1M144 486.5h1M148 486.5h1M152 486.5h1M156 486.5h1M160 486.5h1M164 486.5h1M168 486.5h1M172 486.5h1M176 486.5h1M180 486.5h1M184 486.5h1M188 486.5h1M192 486.5h1M196 486.5h1M200 486.5h1M204 486.5h1M208 486.5h1M212 486.5h1M216 486.5h1M220 486.5h1M224 486.5h1M228 486.5h1M232 486.5h1M236 486.5h1M240 486.5h1M244 486.5h1M248 486.5h1M252 486.5h1M256 486.5h1M260 486.5h1M264 486.5h1M268 486.5h1M273 486.5h1M277 486.5h1M281 486.5h1M285 486.5h1M289 486.5h1M293 486.5h1M297 486.5h1M301 486.5h1M305 486.5h1M309 486.5h1M313 486.5h1M317 486.5h1M321 486.5h1M325 486.5h1M329 486.5h1M333 486.5h1M337 486.5h1M341 486.5h1M345 486.5h1M349 486.5h1M353 486.5h1M357 486.5h1M361 486.5h1M365 486.5h1M369 486.5h1M373 486.5h1M377 486.5h1M381 486.5h1M385 486.5h1M389 486.5h1M393 486.5h1M397 486.5h1M401 486.5h1M405 486.5h1M410 486.5h1M414 486.5h1M418 486.5h1M422 486.5h1M426 486.5h1M430 486.5h1M434 486.5h1M438 486.5h1M442 486.5h1M446 486.5h1M450 486.5h1M454 486.5h1M458 486.5h1M462 486.5h1M466 486.5h1M470 486.5h1M474 486.5h1M478 486.5h1M482 486.5h1M486 486.5h1M490 486.5h1M494 486.5h1M498 486.5h1M502 486.5h1M506 486.5h1M510 486.5h1M514 486.5h1M518 486.5h1M522 486.5h1M526 486.5h1M530 486.5h1M534 486.5h1M538 486.5h1M543 486.5h1M547 486.5h1M551 486.5h1M555 486.5h1M559 486.5h1M563 486.5h1M567 486.5h1M571 486.5h1M575 486.5h1M579 486.5h1M583 486.5h1M587 486.5h1M591 486.5h1M595 486.5h1M599 486.5h1M603 486.5h1M607 486.5h1M611 486.5h1" stroke="#fff" stroke-width="1" fill="none" shape-rendering="crispEdges"/>
<rect x="75" y="486" width="6" height="1" fill="#fff"/>
<rect x="613" y="486" width="7" height="1" fill="#fff"/>
<path d="M83 504.5h1M87 504.5h1M91 504.5h1M95 504.5h1M99 504.5h1M103 504.5h1M107 504.5h1M111 504.5h1M115 504.5h1M119 504.5h1M123 504.5h1M127 504.5h1M131 504.5h1M135 504.5h1M140 504.5h1M144 504.5h1M148 504.5h1M152 504.5h1M156 504.5h1M160 504.5h1M164 504.5h1M168 504.5h1M172 504.5h1M176 504.5h1M180 504.5h1M184 504.5h1M188 504.5h1M192 504.5h1M196 504.5h1M200 504.5h1M204 504.5h1M208 504.5h1M212 504.5h1M216 504.5h1M220 504.5h1M224 504.5h1M228 504.5h1M232 504.5h1M236 504.5h1M240 504.5h1M244 504.5h1M248 504.5h1M252 504.5h1M256 504.5h1M260 504.5h1M264 504.5h1M268 504.5h1M273 504.5h1M277 504.5h1M281 504.5h1M285 504.5h1M289 504.5h1M293 504.5h1M297 504.5h1M301 504.5h1M305 504.5h1M309 504.5h1M313 504.5h1M317 504.5h1M321 504.5h1M325 504.5h1M329 504.5h1M333 504.5h1M337 504.5h1M341 504.5h1M345 504.5h1M349 504.5h1M353 504.5h1M357 504.5h1M361 504.5h1M365 504.5h1M369 504.5h1M373 504.5h1M377 504.5h1M381 504.5h1M385 504.5h1M389 504.5h1M393 504.5h1M397 504.5h1M401 504.5h1M405 504.5h1M410 504.5h1M414 504.5h1M418 504.5h1M422 504.5h1M426 504.5h1M430 504.5h1M434 504.5h1M438 504.5h1M442 504.5h1M446 504.5h1M450 504.5h1M454 504.5h1M458 504.5h1M462 504.5h1M466 504.5h1M470 504.5h1M474 504.5h1M478 504.5h1M482 504.5h1M486 504.5h1M490 504.5h1M494 504.5h1M498 504.5h1M502 504.5h1M506 504.5h1M510 504.5h1M514 504.5h1M518 504.5h1M522 504.5h1M526 504.5h1M530 504.5h1M534 504.5h1M538 504.5h1M543 504.5h1M547 504.5h1M551 504.5h1M555 504.5h1M559 504.5h1M563 504.5h1M567 504.5h1M571 504.5h1M575 504.5h1M579 504.5h1M583 504.5h1M587 504.5h1M591 504.5h1M595 504.5h1M599 504.5h1M603 504.5h1M607 504.5h1M611 504.5h1" stroke="#fff" stroke-width="1" fill="none" shape-rendering="crispEdges"/>
<rect x="75" y="504" width="6" height="1" fill="#fff"/>
<rect x="613" y="504" width="7" height="1" fill="#fff"/>
<path d="M83 523.5h1M87 523.5h1M91 523.5h1M95 523.5h1M99 523.5h1M103 523.5h1M107 523.5h1M111 523.5h1M115 523.5h1M119 523.5h1M123 523.5h1M127 523.5h1M131 523.5h1M135 523.5h1M140 523.5h1M144 523.5h1M148 523.5h1M152 523.5h1M156 523.5h1M160 523.5h1M164 523.5h1M168 523.5h1M172 523.5h1M176 523.5h1M180 523.5h1M184 523.5h1M188 523.5h1M192 523.5h1M196 523.5h1M200 523.5h1M204 523.5h1M208 523.5h1M212 523.5h1M216 523.5h1M220 523.5h1M224 523.5h1M228 523.5h1M232 523.5h1M236 523.5h1M240 523.5h1M244 523.5h1M248 523.5h1M252 523.5h1M256 523.5h1M260 523.5h1M264 523.5h1M268 523.5h1M273 523.5h1M277 523.5h1M281 523.5h1M285 523.5h1M289 523.5h1M293 523.5h1M297 523.5h1M301 523.5h1M305 523.5h1M309 523.5h1M313 523.5h1M317 523.5h1M321 523.5h1M325 523.5h1M329 523.5h1M333 523.5h1M337 523.5h1M341 523.5h1M345 523.5h1M349 523.5h1M353 523.5h1M357 523.5h1M361 523.5h1M365 523.5h1M369 523.5h1M373 523.5h1M377 523.5h1M381 523.5h1M385 523.5h1M389 523.5h1M393 523.5h1M397 523.5h1M401 523.5h1M405 523.5h1M410 523.5h1M414 523.5h1M418 523.5h1M422 523.5h1M426 523.5h1M430 523.5h1M434 523.5h1M438 523.5h1M442 523.5h1M446 523.5h1M450 523.5h1M454 523.5h1M458 523.5h1M462 523.5h1M466 523.5h1M470 523.5h1M474 523.5h1M478 523.5h1M482 523.5h1M486 523.5h1M490 523.5h1M494 523.5h1M498 523.5h1M502 523.5h1M506 523.5h1M510 523.5h1M514 523.5h1M518 523.5h1M522 523.5h1M526 523.5h1M530 523.5h1M534 523.5h1M538 523.5h1M543 523.5h1M547 523.5h1M551 523.5h1M555 523.5h1M559 523.5h1M563 523.5h1M567 523.5h1M571 523.5h1M575 523.5h1M579 523.5h1M583 523.5h1M587 523.5h1M591 523.5h1M595 523.5h1M599 523.5h1M603 523.5h1M607 523.5h1M611 523.5h1" stroke="#fff" stroke-width="1" fill="none" shape-rendering="crispEdges"/>
<rect x="75" y="523" width="6" height="1" fill="#fff"/>
<rect x="613" y="523" width="7" height="1" fill="#fff"/>
<rect x="75" y="365" width="4" height="1" fill="#fff"/>
<rect x="616" y="365" width="4" height="1" fill="#fff"/>
<rect x="75" y="384" width="4" height="1" fill="#fff"/>
<rect x="616" y="384" width="4" height="1" fill="#fff"/>
<rect x="75" y="402" width="4" height="1" fill="#fff"/>
<rect x="616" y="402" width="4" height="1" fill="#fff"/>
<rect x="75" y="421" width="4" height="1" fill="#fff"/>
<rect x="616" y="421" width="4" height="1" fill="#fff"/>
<rect x="75" y="439" width="4" height="1" fill="#fff"/>
<rect x="616" y="439" width="4" height="1" fill="#fff"/>
<rect x="75" y="458" width="4" height="1" fill="#fff"/>
<rect x="616" y="458" width="4" height="1" fill="#fff"/>
<rect x="75" y="476" width="4" height="1" fill="#fff"/>
<rect x="616" y="476" width="4" height="1" fill="#fff"/>
<rect x="75" y="495" width="4" height="1" fill="#fff"/>
<rect x="616" y="495" width="4" height="1" fill="#fff"/>
<rect x="75" y="514" width="4" height="1" fill="#fff"/>
<rect x="616" y="514" width="4" height="1" fill="#fff"/>
<rect x="75" y="532" width="4" height="1" fill="#fff"/>
<rect x="616" y="532" width="4" height="1" fill="#fff"/>
<rect x="221" y="361" width="81.5" height="1" fill="#50b000"/>
<rect x="315" y="361" width="81" height="1" fill="#50b000"/>
<rect x="76" y="382" width="15" height="1" fill="#00a8ff"/>
<polyline points="91.0,382.5 93.0,383.5 95.0,385.5" fill="none" stroke="#ff0000" stroke-width="1" />
<rect x="95" y="385" width="19.5" height="1" fill="#ff0000"/>
<rect x="114.5" y="384" width="28" height="1" fill="#ff0000"/>
<rect x="142.5" y="383" width="26.5" height="1" fill="#00a8ff"/>
<rect x="169" y="382" width="23" height="1" fill="#00a8ff"/>
<rect x="192" y="384" width="21.5" height="1" fill="#ff0000"/>
<polyline points="213.5,384.5 216.0,386.5 219.2,393.0" fill="none" stroke="#ff0000" stroke-width="1" />
<rect x="295" y="383" width="17" height="1" fill="#ff0000"/>
<polyline points="312.0,383.5 314.0,387.6" fill="none" stroke="#ff0000" stroke-width="1" />
<rect x="392" y="384" width="23" height="1" fill="#ff0000"/>
<rect x="415" y="385" width="11.5" height="1" fill="#ff0000"/>
<polyline points="426.5,385.5 428.5,382.5" fill="none" stroke="#ff0000" stroke-width="1" />
<rect x="428" y="382" width="4.5" height="1" fill="#00a8ff"/>
<rect x="432.5" y="383" width="5.5" height="1" fill="#00a8ff"/>
<rect x="438" y="383" width="12" height="1" fill="#ff0000"/>
<rect x="450" y="383" width="11.4" height="1" fill="#00a8ff"/>
<rect x="461.4" y="383" width="11.6" height="1" fill="#ff0000"/>
<rect x="473" y="383" width="11.4" height="1" fill="#00a8ff"/>
<rect x="484.4" y="383" width="11.2" height="1" fill="#ff0000"/>
<rect x="495.6" y="383" width="11.4" height="1" fill="#00a8ff"/>
<rect x="507" y="383" width="11.6" height="1" fill="#ff0000"/>
<rect x="518.6" y="383" width="11.4" height="1" fill="#00a8ff"/>
<rect x="530" y="383" width="11.5" height="1" fill="#ff0000"/>
<rect x="541.5" y="383" width="10.8" height="1" fill="#00a8ff"/>
<rect x="552.3" y="383" width="12.7" height="1" fill="#ff0000"/>
<rect x="565" y="383" width="10" height="1" fill="#00a8ff"/>
<rect x="575" y="383" width="12" height="1" fill="#ff0000"/>
<rect x="587" y="383" width="11.5" height="1" fill="#00a8ff"/>
<rect x="598.5" y="383" width="11.5" height="1" fill="#ff0000"/>
<rect x="610" y="383" width="9" height="1" fill="#00a8ff"/>
<rect x="76" y="410" width="16" height="1" fill="#ff8c00"/>
<rect x="92" y="411" width="25" height="1" fill="#ff8c00"/>
<rect x="92" y="411" width="3" height="3" fill="#ff8c00"/>
<rect x="117" y="410" width="8" height="3" fill="#ff8c00"/>
<rect x="125" y="411" width="45" height="3" fill="#ff8c00"/>
<rect x="160" y="410" width="10" height="1" fill="#ff8c00"/>
<rect x="170" y="411" width="22" height="2" fill="#ff8c00"/>
<rect x="192" y="411" width="21.5" height="3" fill="#ff8c00"/>
<polyline points="213.0,412.0 216.0,410.5" fill="none" stroke="#ff8c00" stroke-width="2" />
<rect x="295" y="411" width="17" height="3" fill="#ff8c00"/>
<polyline points="311.0,411.5 314.0,409.0" fill="none" stroke="#ff8c00" stroke-width="2" />
<rect x="392" y="411" width="22" height="3" fill="#ff8c00"/>
<rect x="414" y="411" width="13" height="1" fill="#ff8c00"/>
<rect x="427" y="410" width="6" height="1" fill="#ff8c00"/>
<rect x="433" y="411" width="186" height="3" fill="#ff8c00"/>
<rect x="76" y="423" width="16" height="1" fill="#ff00ff"/>
<polyline points="92.0,423.5 93.0,421.5" fill="none" stroke="#ff00ff" stroke-width="1" />
<rect x="93" y="421" width="323.5" height="1" fill="#ff00ff"/>
<rect x="192.5" y="421" width="2" height="1" fill="#50b000"/>
<rect x="416.5" y="420" width="9" height="1" fill="#50b000"/>
<polyline points="425.5,420.5 427.0,423.5" fill="none" stroke="#ff00ff" stroke-width="1" />
<rect x="427" y="423" width="5" height="1" fill="#ff00ff"/>
<polyline points="432.0,423.5 433.5,421.5" fill="none" stroke="#50b000" stroke-width="1" />
<rect x="433" y="421" width="186" height="1" fill="#50b000"/>
<rect x="76" y="446" width="16" height="1" fill="#ff0000"/>
<rect x="92" y="447" width="73" height="1" fill="#ff0000"/>
<rect x="165" y="446" width="30" height="1" fill="#ff0000"/>
<polyline points="195.0,446.5 200.0,439.5" fill="none" stroke="#ff0000" stroke-width="1" />
<rect x="200" y="439" width="14" height="1" fill="#ff0000"/>
<rect x="214" y="439" width="8" height="1" fill="#00a8ff"/>
<rect x="222" y="439" width="7" height="1" fill="#ff0000"/>
<rect x="229" y="439" width="7" height="1" fill="#00a8ff"/>
<rect x="236" y="439" width="6" height="1" fill="#ff0000"/>
<rect x="242" y="439" width="6" height="1" fill="#00a8ff"/>
<rect x="248" y="439" width="7" height="1" fill="#ff0000"/>
<rect x="255" y="439" width="7" height="1" fill="#00a8ff"/>
<rect x="262" y="439" width="7" height="1" fill="#ff0000"/>
<rect x="269" y="439" width="7" height="1" fill="#00a8ff"/>
<rect x="276" y="439" width="5" height="1" fill="#ff0000"/>
<rect x="281" y="439" width="7" height="1" fill="#00a8ff"/>
<rect x="288" y="439" width="23" height="1" fill="#ff0000"/>
<rect x="311" y="439" width="8.6" height="1" fill="#00a8ff"/>
<rect x="319.6" y="439" width="5.4" height="1" fill="#ff0000"/>
<rect x="325" y="439" width="7" height="1" fill="#00a8ff"/>
<rect x="332" y="439" width="6.8" height="1" fill="#ff0000"/>
<rect x="338.8" y="439" width="7.2" height="1" fill="#00a8ff"/>
<rect x="346" y="439" width="6.6" height="1" fill="#ff0000"/>
<rect x="352.6" y="439" width="7" height="1" fill="#00a8ff"/>
<rect x="359.6" y="439" width="5.4" height="1" fill="#ff0000"/>
<rect x="365" y="439" width="7" height="1" fill="#00a8ff"/>
<rect x="372" y="439" width="7" height="1" fill="#ff0000"/>
<rect x="379" y="439" width="6.2" height="1" fill="#00a8ff"/>
<rect x="385.2" y="439" width="27.2" height="1" fill="#ff0000"/>
<polyline points="412.4,439.5 414.8,442.0 415.5,446.5" fill="none" stroke="#ff0000" stroke-width="1" />
<rect x="415.5" y="447" width="10.5" height="1" fill="#ff0000"/>
<rect x="426" y="446" width="7" height="1" fill="#ff0000"/>
<rect x="433" y="447" width="186" height="1" fill="#ff0000"/>
<rect x="76" y="458" width="14" height="1" fill="#969696"/>
<rect x="90" y="458" width="4" height="1" fill="#ff8c00"/>
<polyline points="94.0,458.5 97.0,456.5 100.0,457.5" fill="none" stroke="#969696" stroke-width="1" />
<rect x="100" y="457" width="28" height="1" fill="#969696"/>
<rect x="128" y="458" width="9.5" height="1" fill="#969696"/>
<rect x="137.5" y="458" width="22.5" height="1" fill="#ff8c00"/>
<rect x="160" y="459" width="32.5" height="1" fill="#ff8c00"/>
<rect x="190" y="458" width="7" height="1" fill="#ff8c00"/>
<rect x="197" y="458" width="22" height="1" fill="#969696"/>
<rect x="219" y="458" width="7" height="1" fill="#ff8c00"/>
<rect x="226" y="458" width="7" height="1" fill="#969696"/>
<rect x="233" y="458" width="6" height="1" fill="#ff8c00"/>
<rect x="239" y="458" width="6" height="1" fill="#969696"/>
<rect x="245" y="458" width="7" height="1" fill="#ff8c00"/>
<rect x="252" y="458" width="7" height="1" fill="#969696"/>
<rect x="259" y="458" width="6" height="1" fill="#ff8c00"/>
<rect x="265" y="458" width="7" height="1" fill="#969696"/>
<rect x="272" y="458" width="6" height="1" fill="#ff8c00"/>
<rect x="278" y="458" width="7" height="1" fill="#969696"/>
<rect x="285" y="458" width="6" height="1" fill="#ff8c00"/>
<rect x="292" y="458" width="24" height="1" fill="#969696"/>
<rect x="316" y="458" width="7" height="1" fill="#ff8c00"/>
<rect x="323" y="458" width="6" height="1" fill="#969696"/>
<rect x="329" y="458" width="7" height="1" fill="#ff8c00"/>
<rect x="336" y="458" width="7" height="1" fill="#969696"/>
<rect x="343" y="458" width="6" height="1" fill="#ff8c00"/>
<rect x="349" y="458" width="7" height="1" fill="#969696"/>
<rect x="356" y="458" width="6" height="1" fill="#ff8c00"/>
<rect x="362" y="458" width="7" height="1" fill="#969696"/>
<rect x="369" y="458" width="6" height="1" fill="#ff8c00"/>
<rect x="375" y="458" width="7" height="1" fill="#969696"/>
<rect x="382" y="458" width="7" height="1" fill="#ff8c00"/>
<rect x="389" y="458" width="25" height="1" fill="#969696"/>
<rect x="414" y="457" width="13" height="1" fill="#969696"/>
<rect x="427" y="458" width="192" height="1" fill="#ff8c00"/>
<rect x="76" y="480" width="16" height="1" fill="#ff00ff"/>
<rect x="92" y="479" width="103" height="1" fill="#ff00ff"/>
<polyline points="195.0,479.5 197.0,481.0 199.0,487.0" fill="none" stroke="#ff00ff" stroke-width="1" />
<rect x="198" y="486" width="216.5" height="3" fill="#ff00ff"/>
<polyline points="414.0,487.0 416.5,479.5" fill="none" stroke="#ff00ff" stroke-width="1" />
<rect x="416" y="479" width="11" height="1" fill="#ff00ff"/>
<rect x="427" y="480" width="5" height="1" fill="#ff00ff"/>
<rect x="432" y="479" width="187" height="1" fill="#ff00ff"/>
<rect x="76" y="498" width="110" height="1" fill="#ff0000"/>
<rect x="186" y="497" width="4" height="1" fill="#ff0000"/>
<rect x="190" y="498" width="5.5" height="1" fill="#ff0000"/>
<polyline points="195.5,498.5 197.0,500.0 199.0,505.0" fill="none" stroke="#ff0000" stroke-width="1" />
<rect x="198.8" y="504" width="16.2" height="3" fill="#ff0000"/>
<polyline points="215.0,503.0 217.5,501.0" fill="none" stroke="#ff0000" stroke-width="1" />
<rect x="294.8" y="504" width="18.7" height="3" fill="#ff0000"/>
<rect x="392" y="504" width="22.5" height="3" fill="#ff0000"/>
<polyline points="414.0,504.5 416.0,499.5 418.0,497.5" fill="none" stroke="#ff0000" stroke-width="1" />
<rect x="417" y="497" width="8" height="1" fill="#ff0000"/>
<rect x="425" y="498" width="194" height="1" fill="#ff0000"/>
<rect x="76" y="517" width="14" height="1" fill="#ff8c00"/>
<polyline points="90.0,517.5 94.0,514.5" fill="none" stroke="#ff8c00" stroke-width="1" />
<rect x="94" y="514" width="43" height="1" fill="#ff8c00"/>
<rect x="137" y="515" width="55" height="1" fill="#ff8c00"/>
<rect x="192" y="514" width="9" height="1" fill="#ff8c00"/>
<rect x="201" y="514" width="13" height="1" fill="#969696"/>
<polyline points="214.0,514.5 217.0,512.0 219.6,508.2" fill="none" stroke="#969696" stroke-width="1" />
<rect x="294.8" y="514" width="4.2" height="1" fill="#ff8c00"/>
<rect x="299" y="514" width="13" height="1" fill="#969696"/>
<polyline points="312.0,514.5 313.6,511.4" fill="none" stroke="#969696" stroke-width="1" />
<rect x="392" y="514" width="16" height="1" fill="#ff8c00"/>
<rect x="408" y="514" width="18" height="1" fill="#969696"/>
<polyline points="426.0,514.5 428.0,517.0 431.0,517.0 433.0,514.5" fill="none" stroke="#ff8c00" stroke-width="1" />
<rect x="433" y="514" width="186" height="1" fill="#ff8c00"/>
<rect x="76" y="529" width="14" height="1" fill="#50b000"/>
<polyline points="90.0,529.5 93.0,527.5" fill="none" stroke="#50b000" stroke-width="1" />
<rect x="93" y="527" width="102.5" height="1" fill="#50b000"/>
<polyline points="195.5,527.5 199.6,532.5" fill="none" stroke="#50b000" stroke-width="1" />
<rect x="199.6" y="532" width="213.4" height="1" fill="#ff00ff"/>
<polyline points="413.0,532.5 416.0,526.5" fill="none" stroke="#50b000" stroke-width="1" />
<rect x="416" y="526" width="10" height="1" fill="#50b000"/>
<rect x="426" y="528" width="6.5" height="1" fill="#50b000"/>
<rect x="432.5" y="527" width="186.5" height="1" fill="#50b000"/>
<polyline points="220.0,389.0 222.0,384.0" fill="none" stroke="#ff0000" stroke-width="1.2" />
<polyline points="242.0,384.0 244.0,388.0" fill="none" stroke="#ff0000" stroke-width="1.2" />
<polyline points="246.4,389.2 244.0,393.0 246.0,393.0" fill="none" stroke="#ff0000" stroke-width="1.2" />
<polyline points="260.0,387.6 262.0,384.0" fill="none" stroke="#ff0000" stroke-width="1.2" />
<polyline points="281.0,385.0 283.0,389.0" fill="none" stroke="#ff0000" stroke-width="1.2" />
<polyline points="286.4,389.0 284.3,393.0 286.0,393.0" fill="none" stroke="#ff0000" stroke-width="1.2" />
<polyline points="227.2,380.0 228.8,383.6" fill="none" stroke="#00a8ff" stroke-width="1.2" />
<polyline points="236.8,380.0 235.2,383.6" fill="none" stroke="#00a8ff" stroke-width="1.2" />
<polyline points="248.0,382.8 251.5,377.5 254.7,382.8" fill="none" stroke="#00a8ff" stroke-width="1.2" />
<polyline points="267.2,380.0 268.8,383.6" fill="none" stroke="#00a8ff" stroke-width="1.2" />
<polyline points="276.8,380.0 275.2,383.6" fill="none" stroke="#00a8ff" stroke-width="1.2" />
<polyline points="288.8,380.4 289.6,376.4 292.5,376.4 295.2,382.8" fill="none" stroke="#00a8ff" stroke-width="1.2" />
<polyline points="224.0,398.0 225.6,401.5" fill="none" stroke="#969696" stroke-width="1.2" />
<polyline points="245.3,401.5 247.2,398.0" fill="none" stroke="#969696" stroke-width="1.2" />
<polyline points="246.4,395.6 250.4,397.7 248.0,399.0" fill="none" stroke="#969696" stroke-width="1.2" />
<polyline points="263.2,398.0 264.8,402.0" fill="none" stroke="#969696" stroke-width="1.2" />
<polyline points="272.8,399.3 271.2,402.0" fill="none" stroke="#969696" stroke-width="1.2" />
<polyline points="285.6,402.0 287.7,395.6 290.9,402.0" fill="none" stroke="#969696" stroke-width="1.2" />
<polyline points="217.3,406.8 218.9,403.6" fill="none" stroke="#ff8c00" stroke-width="1.2" />
<polyline points="230.4,405.2 231.7,402.5" fill="none" stroke="#ff8c00" stroke-width="1.2" />
<polyline points="238.0,403.6 239.7,406.8" fill="none" stroke="#ff8c00" stroke-width="1.2" />
<polyline points="256.0,406.8 258.4,403.6" fill="none" stroke="#ff8c00" stroke-width="1.2" />
<polyline points="252.5,408.4 254.0,411.3 255.7,411.3" fill="none" stroke="#ff8c00" stroke-width="1.2" />
<polyline points="278.4,403.6 280.0,406.8" fill="none" stroke="#ff8c00" stroke-width="1.2" />
<polyline points="282.4,408.4 281.3,411.3 279.5,411.3" fill="none" stroke="#ff8c00" stroke-width="1.2" />
<polyline points="292.5,408.4 294.4,411.3" fill="none" stroke="#ff8c00" stroke-width="1.2" />
<polyline points="314.4,405.2 315.5,402.5" fill="none" stroke="#ff8c00" stroke-width="1.2" />
<polyline points="318.8,383.6 320.9,380.0" fill="none" stroke="#00a8ff" stroke-width="1.2" />
<polyline points="332.4,382.0 335.6,377.5 338.8,382.0" fill="none" stroke="#00a8ff" stroke-width="1.2" />
<polyline points="350.0,380.0 352.9,383.6" fill="none" stroke="#00a8ff" stroke-width="1.2" />
<polyline points="358.0,383.6 360.4,380.0" fill="none" stroke="#00a8ff" stroke-width="1.2" />
<polyline points="372.4,380.0 373.2,377.5 375.6,377.5 378.8,382.0" fill="none" stroke="#00a8ff" stroke-width="1.2" />
<polyline points="390.0,380.0 392.0,382.8" fill="none" stroke="#00a8ff" stroke-width="1.2" />
<polyline points="326.0,384.0 327.6,387.6" fill="none" stroke="#ff0000" stroke-width="1.2" />
<polyline points="327.3,392.5 330.0,390.5" fill="none" stroke="#ff0000" stroke-width="1.2" />
<polyline points="339.6,389.2 340.7,393.2 343.6,392.4" fill="none" stroke="#ff0000" stroke-width="1.2" />
<polyline points="344.4,387.6 346.0,384.0" fill="none" stroke="#ff0000" stroke-width="1.2" />
<polyline points="365.2,384.0 366.8,388.4" fill="none" stroke="#ff0000" stroke-width="1.2" />
<polyline points="370.0,389.2 367.6,392.9 369.5,393.0" fill="none" stroke="#ff0000" stroke-width="1.2" />
<polyline points="383.3,387.6 384.9,384.0" fill="none" stroke="#ff0000" stroke-width="1.2" />
<polyline points="330.0,395.6 334.0,397.7" fill="none" stroke="#969696" stroke-width="1.2" />
<polyline points="329.2,401.2 331.6,397.2" fill="none" stroke="#969696" stroke-width="1.2" />
<polyline points="346.8,398.0 348.7,402.5" fill="none" stroke="#969696" stroke-width="1.2" />
<polyline points="356.7,399.3 355.1,402.5" fill="none" stroke="#969696" stroke-width="1.2" />
<polyline points="369.2,401.5 371.6,395.6 374.8,401.5" fill="none" stroke="#969696" stroke-width="1.2" />
<polyline points="386.8,398.8 388.7,402.8" fill="none" stroke="#969696" stroke-width="1.2" />
<polyline points="322.0,402.5 323.9,406.8" fill="none" stroke="#ff8c00" stroke-width="1.2" />
<polyline points="336.4,408.4 337.5,411.3 339.6,411.3" fill="none" stroke="#ff8c00" stroke-width="1.2" />
<polyline points="339.9,406.8 341.7,403.1" fill="none" stroke="#ff8c00" stroke-width="1.2" />
<polyline points="362.0,403.0 363.9,406.8" fill="none" stroke="#ff8c00" stroke-width="1.2" />
<polyline points="366.0,408.4 365.2,411.3 363.3,411.3" fill="none" stroke="#ff8c00" stroke-width="1.2" />
<polyline points="376.4,408.4 377.5,411.3 379.6,411.3" fill="none" stroke="#ff8c00" stroke-width="1.2" />
<polyline points="379.9,406.8 381.7,403.1" fill="none" stroke="#ff8c00" stroke-width="1.2" />
<polyline points="389.2,409.2 391.6,411.6" fill="none" stroke="#ff8c00" stroke-width="1.2" />
<polyline points="219.0,494.6 220.4,491.4" fill="none" stroke="#00a8ff" stroke-width="1.2" />
<polyline points="224.0,491.4 225.5,494.6" fill="none" stroke="#00a8ff" stroke-width="1.2" />
<polyline points="237.2,492.2 238.8,495.4" fill="none" stroke="#00a8ff" stroke-width="1.2" />
<polyline points="246.3,491.4 245.2,495.4" fill="none" stroke="#00a8ff" stroke-width="1.2" />
<polyline points="259.0,490.6 260.4,489.8 264.4,494.6" fill="none" stroke="#00a8ff" stroke-width="1.2" />
<polyline points="285.5,494.6 288.0,490.6 290.0,491.4" fill="none" stroke="#00a8ff" stroke-width="1.2" />
<polyline points="230.0,499.4 231.6,496.2" fill="none" stroke="#ff0000" stroke-width="1.2" />
<polyline points="252.0,496.2 254.0,500.2" fill="none" stroke="#ff0000" stroke-width="1.2" />
<polyline points="253.2,503.4 254.8,504.5 256.4,501.0" fill="none" stroke="#ff0000" stroke-width="1.2" />
<polyline points="270.3,499.4 272.0,495.4" fill="none" stroke="#ff0000" stroke-width="1.2" />
<polyline points="278.0,495.4 279.6,498.6" fill="none" stroke="#ff0000" stroke-width="1.2" />
<polyline points="292.4,496.2 294.0,500.7" fill="none" stroke="#ff0000" stroke-width="1.2" />
<polyline points="234.0,510.3 236.0,513.8" fill="none" stroke="#969696" stroke-width="1.2" />
<polyline points="244.0,510.3 242.3,513.8" fill="none" stroke="#969696" stroke-width="1.2" />
<polyline points="255.3,512.2 258.5,507.0 261.7,512.2" fill="none" stroke="#969696" stroke-width="1.2" />
<polyline points="273.2,509.8 275.6,513.8" fill="none" stroke="#969696" stroke-width="1.2" />
<polyline points="282.8,510.3 281.2,513.8" fill="none" stroke="#969696" stroke-width="1.2" />
<polyline points="228.7,515.0 227.0,519.0" fill="none" stroke="#ff8c00" stroke-width="1.2" />
<polyline points="223.6,519.4 224.9,523.4 227.0,523.0" fill="none" stroke="#ff8c00" stroke-width="1.2" />
<polyline points="248.4,514.0 250.8,519.0" fill="none" stroke="#ff8c00" stroke-width="1.2" />
<polyline points="268.7,514.0 267.0,519.0" fill="none" stroke="#ff8c00" stroke-width="1.2" />
<polyline points="288.4,515.4 290.0,519.4" fill="none" stroke="#ff8c00" stroke-width="1.2" />
<polyline points="289.0,523.0 292.4,523.4 293.2,519.4 294.8,515.4" fill="none" stroke="#ff8c00" stroke-width="1.2" />
<polyline points="321.0,492.2 322.7,495.4" fill="none" stroke="#00a8ff" stroke-width="1.2" />
<polyline points="330.4,491.4 329.0,495.4" fill="none" stroke="#00a8ff" stroke-width="1.2" />
<polyline points="343.2,490.6 345.0,489.8 348.8,494.6" fill="none" stroke="#00a8ff" stroke-width="1.2" />
<polyline points="370.7,491.4 369.0,494.6" fill="none" stroke="#00a8ff" stroke-width="1.2" />
<polyline points="382.4,490.6 384.8,489.8 388.8,494.6" fill="none" stroke="#00a8ff" stroke-width="1.2" />
<polyline points="315.7,496.2 314.4,499.4" fill="none" stroke="#ff0000" stroke-width="1.2" />
<polyline points="336.5,496.2 338.0,500.2" fill="none" stroke="#ff0000" stroke-width="1.2" />
<polyline points="337.6,503.9 339.2,504.5 340.8,501.0" fill="none" stroke="#ff0000" stroke-width="1.2" />
<polyline points="355.7,496.2 354.4,499.4" fill="none" stroke="#ff0000" stroke-width="1.2" />
<polyline points="362.0,495.4 363.7,498.6" fill="none" stroke="#ff0000" stroke-width="1.2" />
<polyline points="375.2,496.2 380.0,501.0 381.6,496.2" fill="none" stroke="#ff0000" stroke-width="1.2" />
<polyline points="389.6,501.0 392.0,504.5" fill="none" stroke="#ff0000" stroke-width="1.2" />
<polyline points="318.0,510.3 319.5,513.5" fill="none" stroke="#969696" stroke-width="1.2" />
<polyline points="327.5,510.3 326.0,514.0" fill="none" stroke="#969696" stroke-width="1.2" />
<polyline points="339.2,512.2 342.0,507.0 345.6,512.2" fill="none" stroke="#969696" stroke-width="1.2" />
<polyline points="357.3,510.3 359.0,513.8" fill="none" stroke="#969696" stroke-width="1.2" />
<polyline points="366.9,510.3 365.3,513.8" fill="none" stroke="#969696" stroke-width="1.2" />
<polyline points="379.5,509.0 382.4,507.4 384.8,513.0" fill="none" stroke="#969696" stroke-width="1.2" />
<polyline points="332.0,514.0 334.0,517.8" fill="none" stroke="#ff8c00" stroke-width="1.2" />
<polyline points="346.4,520.2 347.7,523.4 349.6,522.6" fill="none" stroke="#ff8c00" stroke-width="1.2" />
<polyline points="352.8,514.6 350.4,518.6" fill="none" stroke="#ff8c00" stroke-width="1.2" />
<polyline points="372.0,515.0 374.0,519.0" fill="none" stroke="#ff8c00" stroke-width="1.2" />
<polyline points="377.6,519.4 375.2,523.4 373.3,523.0" fill="none" stroke="#ff8c00" stroke-width="1.2" />
<polyline points="392.0,514.6 390.4,517.8" fill="none" stroke="#ff8c00" stroke-width="1.2" />
<rect x="75" y="356" width="545" height="1" fill="#fff"/>
<rect x="75" y="541" width="545" height="1" fill="#fff"/>
<rect x="75" y="356" width="1" height="186" fill="#fff"/>
<rect x="619" y="356" width="1" height="186" fill="#fff"/>
<rect x="120" y="356" width="1" height="8" fill="#fff"/>
<rect x="120" y="534" width="1" height="8" fill="#fff"/>
<rect x="166" y="356" width="1" height="8" fill="#fff"/>
<rect x="166" y="534" width="1" height="8" fill="#fff"/>
<rect x="211" y="356" width="1" height="15" fill="#fff"/>
<rect x="211" y="527" width="1" height="15" fill="#fff"/>
<rect x="256" y="356" width="1" height="8" fill="#fff"/>
<rect x="256" y="534" width="1" height="8" fill="#fff"/>
<rect x="302" y="356" width="1" height="8" fill="#fff"/>
<rect x="302" y="534" width="1" height="8" fill="#fff"/>
<rect x="347" y="356" width="1" height="15" fill="#fff"/>
<rect x="347" y="527" width="1" height="15" fill="#fff"/>
<rect x="392" y="356" width="1" height="8" fill="#fff"/>
<rect x="392" y="534" width="1" height="8" fill="#fff"/>
<rect x="438" y="356" width="1" height="8" fill="#fff"/>
<rect x="438" y="534" width="1" height="8" fill="#fff"/>
<rect x="483" y="356" width="1" height="15" fill="#fff"/>
<rect x="483" y="527" width="1" height="15" fill="#fff"/>
<rect x="528" y="356" width="1" height="8" fill="#fff"/>
<rect x="528" y="534" width="1" height="8" fill="#fff"/>
<rect x="574" y="356" width="1" height="8" fill="#fff"/>
<rect x="574" y="534" width="1" height="8" fill="#fff"/>
<rect x="621" y="356" width="3" height="10" fill="#50b000"/>
<rect x="621" y="366" width="3" height="9" fill="#ff00ff"/>
<rect x="621" y="375" width="3" height="9" fill="#00a8ff"/>
<rect x="621" y="384" width="3" height="10" fill="#ff0000"/>
<rect x="621" y="394" width="3" height="9" fill="#969696"/>
<rect x="621" y="403" width="3" height="9" fill="#ff8c00"/>
<rect x="621" y="412" width="3" height="9" fill="#50b000"/>
<rect x="621" y="421" width="3" height="10" fill="#ff00ff"/>
<rect x="621" y="431" width="3" height="9" fill="#00a8ff"/>
<rect x="621" y="440" width="3" height="9" fill="#ff0000"/>
<rect x="621" y="449" width="3" height="9" fill="#969696"/>
<rect x="621" y="458" width="3" height="10" fill="#ff8c00"/>
<rect x="621" y="468" width="3" height="9" fill="#50b000"/>
<rect x="621" y="477" width="3" height="9" fill="#ff00ff"/>
<rect x="621" y="486" width="3" height="10" fill="#00a8ff"/>
<rect x="621" y="496" width="3" height="9" fill="#ff0000"/>
<rect x="621" y="505" width="3" height="9" fill="#969696"/>
<rect x="621" y="514" width="3" height="9" fill="#ff8c00"/>
<rect x="621" y="523" width="3" height="10" fill="#50b000"/>
<rect x="621" y="533" width="3" height="9" fill="#ff00ff"/>
</g>
<rect x="620" y="64" width="5" height="1" fill="#ffffff"/>
<rect x="620" y="78" width="5" height="1" fill="#ff8c00"/>
<rect x="620" y="91" width="5" height="1" fill="#ff0000"/>
<rect x="620" y="104" width="5" height="1" fill="#00ff00"/>
<rect x="620" y="117" width="5" height="1" fill="#ff00ff"/>
<rect x="620" y="130" width="5" height="1" fill="#7272ff"/>
<rect x="620" y="143" width="5" height="1" fill="#969696"/>
<rect x="620" y="156" width="5" height="1" fill="#00a8ff"/>
<g id="labels" filter="url(#ds)" transform="translate(-0.5,0)">
<text x="376" y="20.5" font-size="16" text-anchor="middle" fill="#fff" stroke="#fff" font-weight="normal" font-style="normal" textLength="161" lengthAdjust="spacingAndGlyphs" >INCA H TOF Channels</text>
<text x="375.5" y="38" font-size="11" text-anchor="middle" fill="#fff" stroke="#fff" font-weight="normal" font-style="normal" textLength="313" lengthAdjust="spacingAndGlyphs" >2004-201T00:00:00.000 - 2004-201T23:59:00.000 MIMI/APL</text>
<text x="627.3" y="65.2" font-size="12.5" text-anchor="start" fill="#ffffff" stroke="#ffffff" font-weight="bold" font-style="italic" >227-360 keV</text>
<text x="627.3" y="78.3" font-size="12.5" text-anchor="start" fill="#ff8c00" stroke="#ff8c00" font-weight="bold" font-style="italic" >149-227 keV</text>
<text x="627.3" y="91.3" font-size="12.5" text-anchor="start" fill="#ff0000" stroke="#ff0000" font-weight="bold" font-style="italic" >90-149 keV</text>
<text x="627.3" y="104.3" font-size="12.5" text-anchor="start" fill="#00ff00" stroke="#00ff00" font-weight="bold" font-style="italic" >55-90 keV</text>
<text x="627.3" y="117.3" font-size="12.5" text-anchor="start" fill="#ff00ff" stroke="#ff00ff" font-weight="bold" font-style="italic" >35-55 keV</text>
<text x="627.3" y="130.3" font-size="12.5" text-anchor="start" fill="#7272ff" stroke="#7272ff" font-weight="bold" font-style="italic" >24-35 keV</text>
<text x="627.3" y="143.3" font-size="12.5" text-anchor="start" fill="#969696" stroke="#969696" font-weight="bold" font-style="italic" >13-24 keV</text>
<text x="627.3" y="156.3" font-size="12.5" text-anchor="start" fill="#00a8ff" stroke="#00a8ff" font-weight="bold" font-style="italic" >5-13 keV</text>
<text x="628" y="277.5" font-size="10.5" text-anchor="start" fill="#50b000" stroke="#50b000" font-weight="normal" font-style="normal" textLength="24" lengthAdjust="spacingAndGlyphs" >InCal</text>
<text x="628" y="292.5" font-size="10.5" text-anchor="start" fill="#ff0000" stroke="#ff0000" font-weight="normal" font-style="normal" textLength="82.5" lengthAdjust="spacingAndGlyphs" >OutCal:UnPlaned</text>
<text x="628" y="308" font-size="10.5" text-anchor="start" fill="#7272ff" stroke="#7272ff" font-weight="normal" font-style="normal" textLength="69" lengthAdjust="spacingAndGlyphs" >OutCal:Planed</text>
<text x="628" y="320.5" font-size="10.5" text-anchor="start" fill="#969696" stroke="#969696" font-weight="normal" font-style="normal" textLength="47" lengthAdjust="spacingAndGlyphs" >NeuMode</text>
<text x="628" y="335.5" font-size="10.5" text-anchor="start" fill="#00ff00" stroke="#00ff00" font-weight="normal" font-style="normal" textLength="42" lengthAdjust="spacingAndGlyphs" >IonMode</text>
<text x="628" y="350.5" font-size="10.5" text-anchor="start" fill="#ff00ff" stroke="#ff00ff" font-weight="normal" font-style="normal" textLength="48" lengthAdjust="spacingAndGlyphs" >IonMode2</text>
<text x="628" y="369" font-size="12.5" text-anchor="start" fill="#fff" stroke="#fff" font-weight="normal" font-style="normal" textLength="62" lengthAdjust="spacingAndGlyphs" >Spin/P_CK</text>
<text x="628" y="387.57" font-size="12.5" text-anchor="start" fill="#fff" stroke="#fff" font-weight="normal" font-style="normal" textLength="66" lengthAdjust="spacingAndGlyphs" >-X_toSaturn</text>
<text x="628" y="406.14" font-size="12.5" text-anchor="start" fill="#fff" stroke="#fff" font-weight="normal" font-style="normal" textLength="66" lengthAdjust="spacingAndGlyphs" >-Y_toSaturn</text>
<text x="628" y="424.71" font-size="12.5" text-anchor="start" fill="#fff" stroke="#fff" font-weight="normal" font-style="normal" textLength="66" lengthAdjust="spacingAndGlyphs" >-Z_toSaturn</text>
<text x="628" y="443.28" font-size="12.5" text-anchor="start" fill="#fff" stroke="#fff" font-weight="normal" font-style="normal" textLength="52" lengthAdjust="spacingAndGlyphs" >-X_toSun</text>
<text x="628" y="461.85" font-size="12.5" text-anchor="start" fill="#fff" stroke="#fff" font-weight="normal" font-style="normal" textLength="52" lengthAdjust="spacingAndGlyphs" >-Y_toSun</text>
<text x="628" y="480.42" font-size="12.5" text-anchor="start" fill="#fff" stroke="#fff" font-weight="normal" font-style="normal" textLength="52" lengthAdjust="spacingAndGlyphs" >-Z_toSun</text>
<text x="628" y="498.99" font-size="12.5" text-anchor="start" fill="#fff" stroke="#fff" font-weight="normal" font-style="normal" textLength="54.6" lengthAdjust="spacingAndGlyphs" >-X_toNEP</text>
<text x="628" y="517.56" font-size="12.5" text-anchor="start" fill="#fff" stroke="#fff" font-weight="normal" font-style="normal" textLength="54.6" lengthAdjust="spacingAndGlyphs" >-Y_toNEP</text>
<text x="628" y="536.13" font-size="12.5" text-anchor="start" fill="#fff" stroke="#fff" font-weight="normal" font-style="normal" textLength="54.6" lengthAdjust="spacingAndGlyphs" >-Z_toNEP</text>
</g>
<g id="vlabels" filter="url(#dv)" transform="translate(0,0.5)">
<text transform="translate(20,155.8) rotate(-90)" font-size="12" font-weight="bold" text-anchor="middle" fill="#fff" stroke="#fff">Log Cnts</text>
<text transform="translate(36,158.5) rotate(-90)" font-size="11.8" text-anchor="middle" fill="#fff" stroke="#fff">(cm<tspan dy="-4" font-size="7">2</tspan><tspan dy="4">-sr-s-keV)</tspan><tspan dy="-5" font-size="7">-1</tspan></text>
<text transform="translate(37.5,308) rotate(-90)" font-size="10.7" text-anchor="middle" fill="#fff" stroke="#fff">INCA Mode</text>
<text transform="translate(36.8,449) rotate(-90)" font-size="12.5" text-anchor="middle" fill="#fff" stroke="#fff">Cassini Attitude</text>
</g>
<g id="labels2" filter="url(#ds)" transform="translate(-0.5,0)">
<text x="72" y="377" font-size="10.5" text-anchor="end" fill="#fff" stroke="#fff" font-weight="normal" font-style="normal" >180&#176;</text>
<text x="66.5" y="395.6" font-size="10.5" text-anchor="end" fill="#fff" stroke="#fff" font-weight="normal" font-style="normal" >0&#176;</text>
<text x="72" y="525.8" font-size="10.5" text-anchor="end" fill="#fff" stroke="#fff" font-weight="normal" font-style="normal" >100&#176;</text>
<text x="66.5" y="544.5" font-size="10.5" text-anchor="end" fill="#fff" stroke="#fff" font-weight="normal" font-style="normal" >0&#176;</text>
<text x="75.5" y="565.5" font-size="12" text-anchor="middle" fill="#fff" stroke="#fff" font-weight="normal" font-style="normal" textLength="32.6" lengthAdjust="spacingAndGlyphs" >00:00</text>
<text x="211.5" y="565.5" font-size="12" text-anchor="middle" fill="#fff" stroke="#fff" font-weight="normal" font-style="normal" textLength="32.6" lengthAdjust="spacingAndGlyphs" >06:00</text>
<text x="347.5" y="565.5" font-size="12" text-anchor="middle" fill="#fff" stroke="#fff" font-weight="normal" font-style="normal" textLength="32.6" lengthAdjust="spacingAndGlyphs" >12:00</text>
<text x="483.5" y="565.5" font-size="12" text-anchor="middle" fill="#fff" stroke="#fff" font-weight="normal" font-style="normal" textLength="32.6" lengthAdjust="spacingAndGlyphs" >18:00</text>
<text x="75.5" y="597" font-size="12" text-anchor="middle" fill="#fff" stroke="#fff" font-weight="normal" font-style="normal" >100.27</text>
<text x="211.5" y="597" font-size="12" text-anchor="middle" fill="#fff" stroke="#fff" font-weight="normal" font-style="normal" >101.00</text>
<text x="347.5" y="597" font-size="12" text-anchor="middle" fill="#fff" stroke="#fff" font-weight="normal" font-style="normal" >101.72</text>
<text x="483.5" y="597" font-size="12" text-anchor="middle" fill="#fff" stroke="#fff" font-weight="normal" font-style="normal" >102.43</text>
<text x="75.5" y="613" font-size="12" text-anchor="middle" fill="#fff" stroke="#fff" font-weight="normal" font-style="normal" >-17.07</text>
<text x="211.5" y="613" font-size="12" text-anchor="middle" fill="#fff" stroke="#fff" font-weight="normal" font-style="normal" >-17.07</text>
<text x="347.5" y="613" font-size="12" text-anchor="middle" fill="#fff" stroke="#fff" font-weight="normal" font-style="normal" >-17.08</text>
<text x="483.5" y="613" font-size="12" text-anchor="middle" fill="#fff" stroke="#fff" font-weight="normal" font-style="normal" >-17.08</text>
<text x="75.5" y="628" font-size="12" text-anchor="middle" fill="#fff" stroke="#fff" font-weight="normal" font-style="normal" >0514</text>
<text x="211.5" y="628" font-size="12" text-anchor="middle" fill="#fff" stroke="#fff" font-weight="normal" font-style="normal" >0514</text>
<text x="347.5" y="628" font-size="12" text-anchor="middle" fill="#fff" stroke="#fff" font-weight="normal" font-style="normal" >0515</text>
<text x="483.5" y="628" font-size="12" text-anchor="middle" fill="#fff" stroke="#fff" font-weight="normal" font-style="normal" >0515</text>
<text x="75.5" y="659" font-size="12" text-anchor="middle" fill="#fff" stroke="#fff" font-weight="normal" font-style="normal" >305.14</text>
<text x="211.5" y="659" font-size="12" text-anchor="middle" fill="#fff" stroke="#fff" font-weight="normal" font-style="normal" >104.75</text>
<text x="347.5" y="659" font-size="12" text-anchor="middle" fill="#fff" stroke="#fff" font-weight="normal" font-style="normal" >264.36</text>
<text x="483.5" y="659" font-size="12" text-anchor="middle" fill="#fff" stroke="#fff" font-weight="normal" font-style="normal" >63.98</text>
<text x="8" y="573.5" font-size="12" text-anchor="start" fill="#fff" stroke="#fff" font-weight="normal" font-style="normal" >UTC</text>
<text x="8" y="604" font-size="12" text-anchor="start" fill="#fff" stroke="#fff" font-weight="normal" font-style="normal" >R</text>
<text x="16.5" y="613.5" font-size="12" text-anchor="start" fill="#fff" stroke="#fff" font-weight="normal" font-style="normal" >satur</text>
<text x="8" y="620" font-size="12" text-anchor="start" fill="#fff" stroke="#fff" font-weight="normal" font-style="normal" >Lat</text>
<text x="8" y="635" font-size="12" text-anchor="start" fill="#fff" stroke="#fff" font-weight="normal" font-style="normal" >LT</text>
<text x="8" y="651" font-size="12" text-anchor="start" fill="#fff" stroke="#fff" font-weight="normal" font-style="normal" >L</text>
<text x="15" y="660" font-size="12" text-anchor="start" fill="#fff" stroke="#fff" font-weight="normal" font-style="normal" >saturn</text>
<text x="319" y="688" font-size="10.5" text-anchor="start" fill="#fff" stroke="#fff" font-weight="normal" font-style="normal" textLength="113" lengthAdjust="spacingAndGlyphs" >Background Subtracted</text>
<text x="569" y="688" font-size="10.5" text-anchor="start" fill="#fff" stroke="#fff" font-weight="normal" font-style="normal" textLength="66" lengthAdjust="spacingAndGlyphs" >in Stare Mode</text>
</g>
</svg>
</body>
</html>
